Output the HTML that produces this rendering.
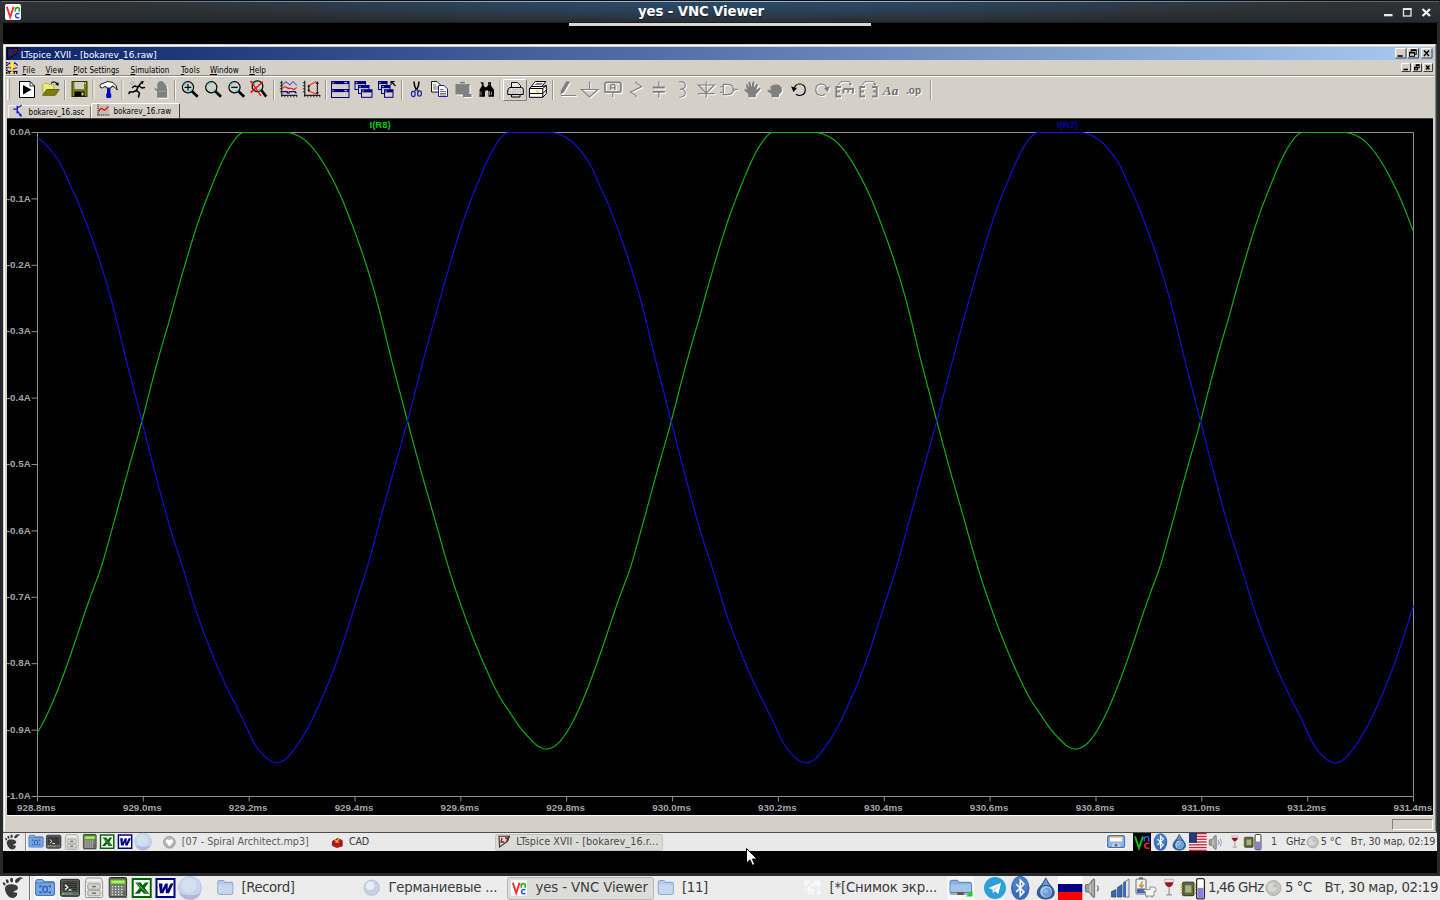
<!DOCTYPE html><html><head><meta charset='utf-8'><title>yes - VNC Viewer</title><style>
*{box-sizing:border-box;margin:0;padding:0}
html,body{width:1440px;height:900px;overflow:hidden;background:#000}
body{position:relative;font-family:"DejaVu Sans","Liberation Sans",sans-serif;font-size:13.33px;color:#2e3436}
.a{position:absolute}
.t{position:absolute;white-space:nowrap;line-height:1}
.cond{font-family:"DejaVu Sans Condensed","DejaVu Sans","Liberation Sans",sans-serif}
.ax{font-family:"Liberation Sans",sans-serif;font-weight:bold;font-size:9.8px;color:#a4a4a4}
.ot{font-size:13.33px;color:#3c3c3c;top:880.5px}
.it{font-size:9.65px;color:#444;top:837px}
svg{position:absolute;overflow:visible;left:0;top:0}
svg text{white-space:pre}
</style></head><body>
<div class="a" style="left:0;top:0;width:1440px;height:876px;background:#27292b"></div>
<div class="a" style="left:3px;top:23px;width:1434px;height:850px;background:#000"></div>
<div class="a" style="left:0;top:0;width:1440px;height:23px;background:linear-gradient(#303335 0%,#2c2e30 60%,#28292b 100%)"></div>
<div class="a" style="left:0;top:0;width:1440px;height:23px;background:radial-gradient(ellipse 620px 24px at 50% 1px,rgba(42,76,110,0.95) 0%,rgba(42,74,106,0.7) 40%,rgba(42,72,102,0.28) 75%,rgba(42,72,102,0) 100%)"></div>
<div class="a" style="left:1px;top:1px;width:1438px;height:1px;background:linear-gradient(90deg,rgba(125,130,135,0.55) 0%,rgba(165,186,206,0.95) 40%,rgba(165,186,206,0.95) 60%,rgba(125,130,135,0.55) 100%)"></div>
<div class="a" style="left:0;top:0;width:1440px;height:1px;background:#0e0f10"></div>
<div class="a" style="left:0;top:22px;width:1440px;height:1px;background:#1d1e1f"></div>
<div class="t" style="left:638px;top:4.5px;font-weight:bold;font-size:13.33px;color:#fff;text-shadow:0 1px 1px rgba(0,0,0,.55);letter-spacing:-0.124px;">yes - VNC Viewer</div>
<div class="a" style="left:569px;top:23px;width:302px;height:3px;background:#d6d6d6"></div>
<div class="a" style="left:3px;top:44px;width:1434px;height:788px;background:#d4d0c8"></div>
<div class="a" style="left:4px;top:45px;width:1431px;height:1px;background:#fff"></div>
<div class="a" style="left:4px;top:45px;width:1px;height:786px;background:#fff"></div>
<div class="a" style="left:1436px;top:44px;width:1px;height:788px;background:#404040"></div>
<div class="a" style="left:1435px;top:45px;width:1px;height:786px;background:#808080"></div>
<div class="a" style="left:6px;top:47px;width:1428px;height:13px;background:linear-gradient(90deg,#0a246a 0%,#a6caf0 100%)"></div>
<div class="t" style="left:20.7px;top:51px;font-size:8.8px;color:#fff;letter-spacing:-0.002px;">LTspice XVII - [bokarev_16.raw]</div>
<div class="t cond" style="left:22.4px;top:65.8px;font-size:8.1px;color:#000;letter-spacing:0.215px;"><u>F</u>ile</div>
<div class="t cond" style="left:45.5px;top:65.8px;font-size:8.1px;color:#000;letter-spacing:0.134px;"><u>V</u>iew</div>
<div class="t cond" style="left:73.3px;top:65.8px;font-size:8.1px;color:#000;letter-spacing:0.015px;"><u>P</u>lot Settings</div>
<div class="t cond" style="left:130.6px;top:65.8px;font-size:8.1px;color:#000;letter-spacing:0.000px;"><u>S</u>imulation</div>
<div class="t cond" style="left:180.9px;top:65.8px;font-size:8.1px;color:#000;letter-spacing:0.261px;"><u>T</u>ools</div>
<div class="t cond" style="left:210px;top:65.8px;font-size:8.1px;color:#000;letter-spacing:-0.001px;"><u>W</u>indow</div>
<div class="t cond" style="left:249.3px;top:65.8px;font-size:8.1px;color:#000;letter-spacing:-0.052px;"><u>H</u>elp</div>
<div class="a" style="left:6px;top:75px;width:1428px;height:1px;background:#8a8780"></div>
<div class="a" style="left:6px;top:76px;width:1428px;height:1px;background:#fff"></div>
<div class="a" style="left:8px;top:104.5px;width:83px;height:13.5px;background:#d4d0c8;border:1px solid #f4f2ee;border-right-color:#77746e;border-bottom:none;border-radius:2px 2px 0 0"></div>
<div class="a" style="left:91px;top:103px;width:89px;height:15px;background:#d4d0c8;border:1px solid #fff;border-right:1px solid #404040;border-bottom:none;border-radius:2px 2px 0 0"></div>
<div class="t cond" style="left:28.6px;top:109.1px;font-size:8px;color:#000;letter-spacing:-0.010px;">bokarev_16.asc</div>
<div class="t cond" style="left:113.4px;top:108.1px;font-size:8px;color:#000;letter-spacing:0.045px;">bokarev_16.raw</div>
<div class="a" style="left:7px;top:118px;width:1426px;height:697px;background:#000;border-top:1px solid #404040"></div>
<svg width="1440" height="900" viewBox="0 0 1440 900">
<path d="M37.5,132.5 H1413.5 V796.5 H37.5 Z" fill="none" stroke="#8e8e8e" stroke-width="1"/>
<path d="M31.5,132.5 H37 M31.5,198.9 H37 M31.5,265.3 H37 M31.5,331.7 H37 M31.5,398.1 H37 M31.5,464.5 H37 M31.5,530.9 H37 M31.5,597.3 H37 M31.5,663.7 H37 M31.5,730.1 H37 M31.5,796.5 H37 M37.5,796.5 V801.5 M143.3,796.5 V801.5 M249.2,796.5 V801.5 M355.0,796.5 V801.5 M460.9,796.5 V801.5 M566.7,796.5 V801.5 M672.6,796.5 V801.5 M778.4,796.5 V801.5 M884.3,796.5 V801.5 M990.1,796.5 V801.5 M1096.0,796.5 V801.5 M1201.8,796.5 V801.5 M1307.7,796.5 V801.5 M1413.5,796.5 V801.5 " stroke="#8e8e8e" stroke-width="1" fill="none"/>
<path d="M37.5,732.2 L39.5,729.0 L41.5,725.5 L43.5,721.7 L45.5,717.8 L47.5,713.7 L49.5,709.4 L51.5,704.9 L53.5,700.2 L55.5,695.4 L57.5,690.5 L59.5,685.4 L61.5,680.1 L63.5,674.7 L65.5,669.3 L67.5,663.7 L69.5,658.0 L71.5,652.3 L73.5,646.4 L75.5,640.6 L77.5,634.6 L79.5,628.6 L81.5,622.5 L83.5,616.5 L85.5,610.7 L87.5,604.9 L89.5,599.3 L91.5,593.8 L93.5,588.4 L95.5,583.1 L97.5,577.9 L99.5,572.4 L101.5,566.3 L103.5,559.8 L105.5,552.9 L107.5,545.7 L109.5,538.4 L111.5,531.2 L113.5,523.9 L115.5,516.7 L117.5,509.4 L119.5,502.0 L121.5,494.6 L123.5,487.2 L125.5,479.9 L127.5,472.6 L129.5,465.4 L131.5,458.3 L133.5,451.3 L135.5,444.3 L137.5,437.3 L139.5,430.1 L141.5,422.8 L143.5,415.3 L145.5,407.6 L147.5,399.7 L149.5,391.9 L151.5,384.1 L153.5,376.4 L155.5,369.0 L157.5,361.6 L159.5,354.4 L161.5,347.3 L163.5,340.4 L165.5,333.6 L167.5,326.8 L169.5,319.8 L171.5,312.7 L173.5,305.4 L175.5,298.1 L177.5,290.8 L179.5,283.7 L181.5,276.7 L183.5,269.8 L185.5,263.0 L187.5,256.2 L189.5,249.5 L191.5,243.0 L193.5,236.5 L195.5,230.2 L197.5,224.1 L199.5,218.1 L201.5,212.5 L203.5,207.0 L205.5,201.7 L207.5,196.6 L209.5,191.5 L211.5,186.5 L213.5,181.6 L215.5,176.8 L217.5,172.0 L219.5,167.2 L221.5,162.7 L223.5,158.5 L225.5,154.4 L227.5,150.7 L229.5,147.2 L231.5,144.0 L233.5,141.1 L235.5,138.5 L237.5,136.2 L239.5,134.4 L241.5,133.0 L243.5,132.5 L245.5,132.5 L247.5,132.5 L249.5,132.5 L251.5,132.5 L253.5,132.5 L255.5,132.5 L257.5,132.5 L259.5,132.5 L261.5,132.5 L263.5,132.5 L265.5,132.5 L267.5,132.5 L269.5,132.5 L271.5,132.5 L273.5,132.5 L275.5,132.5 L277.5,132.5 L279.5,132.5 L281.5,132.5 L283.5,132.5 L285.5,132.5 L287.5,132.5 L289.5,132.8 L291.5,133.3 L293.5,133.9 L295.5,134.7 L297.5,135.6 L299.5,136.5 L301.5,137.7 L303.5,139.0 L305.5,140.5 L307.5,142.3 L309.5,144.3 L311.5,146.4 L313.5,148.8 L315.5,151.3 L317.5,154.0 L319.5,156.9 L321.5,159.9 L323.5,163.1 L325.5,166.5 L327.5,170.0 L329.5,173.6 L331.5,177.3 L333.5,181.1 L335.5,185.1 L337.5,189.2 L339.5,193.4 L341.5,197.8 L343.5,202.5 L345.5,207.4 L347.5,212.5 L349.5,217.7 L351.5,222.9 L353.5,228.2 L355.5,233.6 L357.5,239.1 L359.5,244.7 L361.5,250.6 L363.5,256.5 L365.5,262.6 L367.5,268.8 L369.5,275.2 L371.5,281.8 L373.5,288.6 L375.5,295.7 L377.5,303.1 L379.5,310.7 L381.5,318.7 L383.5,326.9 L385.5,335.4 L387.5,343.7 L389.5,351.9 L391.5,359.9 L393.5,367.7 L395.5,375.5 L397.5,383.2 L399.5,390.8 L401.5,398.4 L403.5,405.9 L405.5,413.5 L407.5,421.0 L409.5,428.5 L411.5,436.1 L413.5,443.5 L415.5,451.0 L417.5,458.4 L419.5,465.6 L421.5,472.8 L423.5,479.9 L425.5,487.0 L427.5,493.9 L429.5,500.9 L431.5,507.8 L433.5,514.8 L435.5,521.8 L437.5,528.9 L439.5,536.0 L441.5,543.2 L443.5,550.3 L445.5,557.3 L447.5,564.2 L449.5,570.8 L451.5,577.2 L453.5,583.4 L455.5,589.4 L457.5,595.3 L459.5,601.0 L461.5,606.7 L463.5,612.3 L465.5,617.9 L467.5,623.3 L469.5,628.6 L471.5,633.9 L473.5,639.0 L475.5,644.0 L477.5,648.9 L479.5,653.8 L481.5,658.5 L483.5,663.1 L485.5,667.6 L487.5,672.1 L489.5,676.4 L491.5,680.7 L493.5,684.9 L495.5,688.9 L497.5,692.8 L499.5,696.5 L501.5,699.9 L503.5,703.0 L505.5,706.0 L507.5,708.9 L509.5,711.8 L511.5,714.8 L513.5,717.9 L515.5,721.0 L517.5,723.9 L519.5,726.7 L521.5,729.3 L523.5,731.7 L525.5,734.0 L527.5,736.2 L529.5,738.2 L531.5,740.3 L533.5,742.3 L535.5,744.2 L537.5,745.8 L539.5,747.1 L541.5,748.0 L543.5,748.7 L545.5,749.0 L547.5,748.9 L549.5,748.5 L551.5,747.7 L553.5,746.7 L555.5,745.5 L557.5,743.9 L559.5,741.9 L561.5,739.6 L563.5,737.0 L565.5,734.2 L567.5,731.1 L569.5,727.8 L571.5,724.2 L573.5,720.4 L575.5,716.4 L577.5,712.2 L579.5,707.9 L581.5,703.3 L583.5,698.6 L585.5,693.7 L587.5,688.7 L589.5,683.5 L591.5,678.2 L593.5,672.8 L595.5,667.3 L597.5,661.7 L599.5,656.0 L601.5,650.2 L603.5,644.4 L605.5,638.5 L607.5,632.5 L609.5,626.4 L611.5,620.4 L613.5,614.5 L615.5,608.6 L617.5,602.9 L619.5,597.3 L621.5,591.9 L623.5,586.5 L625.5,581.3 L627.5,576.0 L629.5,570.3 L631.5,564.1 L633.5,557.4 L635.5,550.4 L637.5,543.2 L639.5,535.9 L641.5,528.6 L643.5,521.4 L645.5,514.1 L647.5,506.8 L649.5,499.4 L651.5,492.0 L653.5,484.6 L655.5,477.3 L657.5,470.1 L659.5,462.9 L661.5,455.9 L663.5,448.9 L665.5,441.9 L667.5,434.8 L669.5,427.6 L671.5,420.2 L673.5,412.6 L675.5,404.8 L677.5,397.0 L679.5,389.1 L681.5,381.4 L683.5,373.8 L685.5,366.4 L687.5,359.0 L689.5,351.9 L691.5,344.9 L693.5,338.0 L695.5,331.2 L697.5,324.4 L699.5,317.4 L701.5,310.2 L703.5,302.8 L705.5,295.5 L707.5,288.3 L709.5,281.2 L711.5,274.3 L713.5,267.4 L715.5,260.6 L717.5,253.9 L719.5,247.2 L721.5,240.7 L723.5,234.3 L725.5,228.0 L727.5,222.0 L729.5,216.1 L731.5,210.5 L733.5,205.1 L735.5,199.9 L737.5,194.8 L739.5,189.7 L741.5,184.8 L743.5,179.9 L745.5,175.1 L747.5,170.3 L749.5,165.6 L751.5,161.2 L753.5,157.0 L755.5,153.1 L757.5,149.4 L759.5,146.1 L761.5,143.0 L763.5,140.1 L765.5,137.6 L767.5,135.6 L769.5,133.8 L771.5,132.6 L773.5,132.5 L775.5,132.5 L777.5,132.5 L779.5,132.5 L781.5,132.5 L783.5,132.5 L785.5,132.5 L787.5,132.5 L789.5,132.5 L791.5,132.5 L793.5,132.5 L795.5,132.5 L797.5,132.5 L799.5,132.5 L801.5,132.5 L803.5,132.5 L805.5,132.5 L807.5,132.5 L809.5,132.5 L811.5,132.5 L813.5,132.5 L815.5,132.5 L817.5,132.6 L819.5,132.9 L821.5,133.5 L823.5,134.2 L825.5,135.0 L827.5,135.9 L829.5,136.9 L831.5,138.1 L833.5,139.5 L835.5,141.1 L837.5,142.9 L839.5,145.0 L841.5,147.2 L843.5,149.6 L845.5,152.2 L847.5,155.0 L849.5,157.9 L851.5,161.0 L853.5,164.3 L855.5,167.8 L857.5,171.3 L859.5,174.9 L861.5,178.6 L863.5,182.5 L865.5,186.5 L867.5,190.6 L869.5,194.9 L871.5,199.4 L873.5,204.2 L875.5,209.2 L877.5,214.3 L879.5,219.5 L881.5,224.8 L883.5,230.1 L885.5,235.5 L887.5,241.0 L889.5,246.8 L891.5,252.6 L893.5,258.6 L895.5,264.7 L897.5,271.0 L899.5,277.4 L901.5,284.1 L903.5,291.0 L905.5,298.2 L907.5,305.7 L909.5,313.5 L911.5,321.5 L913.5,329.9 L915.5,338.3 L917.5,346.6 L919.5,354.7 L921.5,362.6 L923.5,370.5 L925.5,378.2 L927.5,385.8 L929.5,393.4 L931.5,401.0 L933.5,408.6 L935.5,416.1 L937.5,423.6 L939.5,431.2 L941.5,438.7 L943.5,446.2 L945.5,453.6 L947.5,460.9 L949.5,468.2 L951.5,475.3 L953.5,482.4 L955.5,489.4 L957.5,496.4 L959.5,503.3 L961.5,510.3 L963.5,517.2 L965.5,524.3 L967.5,531.4 L969.5,538.5 L971.5,545.7 L973.5,552.8 L975.5,559.7 L977.5,566.5 L979.5,573.1 L981.5,579.4 L983.5,585.6 L985.5,591.5 L987.5,597.3 L989.5,603.0 L991.5,608.7 L993.5,614.3 L995.5,619.8 L997.5,625.2 L999.5,630.5 L1001.5,635.7 L1003.5,640.8 L1005.5,645.7 L1007.5,650.6 L1009.5,655.4 L1011.5,660.1 L1013.5,664.7 L1015.5,669.2 L1017.5,673.6 L1019.5,677.9 L1021.5,682.1 L1023.5,686.3 L1025.5,690.3 L1027.5,694.1 L1029.5,697.7 L1031.5,701.0 L1033.5,704.0 L1035.5,707.0 L1037.5,709.9 L1039.5,712.9 L1041.5,715.9 L1043.5,719.0 L1045.5,722.0 L1047.5,724.9 L1049.5,727.7 L1051.5,730.2 L1053.5,732.5 L1055.5,734.8 L1057.5,736.9 L1059.5,739.0 L1061.5,741.0 L1063.5,743.0 L1065.5,744.8 L1067.5,746.3 L1069.5,747.4 L1071.5,748.3 L1073.5,748.8 L1075.5,749.0 L1077.5,748.8 L1079.5,748.3 L1081.5,747.4 L1083.5,746.3 L1085.5,745.0 L1087.5,743.3 L1089.5,741.1 L1091.5,738.7 L1093.5,736.0 L1095.5,733.1 L1097.5,730.0 L1099.5,726.5 L1101.5,722.9 L1103.5,719.0 L1105.5,715.0 L1107.5,710.7 L1109.5,706.3 L1111.5,701.6 L1113.5,696.9 L1115.5,692.0 L1117.5,686.9 L1119.5,681.7 L1121.5,676.3 L1123.5,670.9 L1125.5,665.4 L1127.5,659.7 L1129.5,654.0 L1131.5,648.2 L1133.5,642.3 L1135.5,636.4 L1137.5,630.4 L1139.5,624.3 L1141.5,618.3 L1143.5,612.4 L1145.5,606.6 L1147.5,601.0 L1149.5,595.4 L1151.5,590.0 L1153.5,584.7 L1155.5,579.5 L1157.5,574.1 L1159.5,568.2 L1161.5,561.8 L1163.5,555.0 L1165.5,547.9 L1167.5,540.6 L1169.5,533.3 L1171.5,526.1 L1173.5,518.9 L1175.5,511.6 L1177.5,504.2 L1179.5,496.8 L1181.5,489.4 L1183.5,482.1 L1185.5,474.8 L1187.5,467.5 L1189.5,460.4 L1191.5,453.4 L1193.5,446.4 L1195.5,439.4 L1197.5,432.3 L1199.5,425.0 L1201.5,417.6 L1203.5,409.9 L1205.5,402.1 L1207.5,394.2 L1209.5,386.4 L1211.5,378.7 L1213.5,371.2 L1215.5,363.8 L1217.5,356.5 L1219.5,349.4 L1221.5,342.4 L1223.5,335.6 L1225.5,328.8 L1227.5,321.9 L1229.5,314.9 L1231.5,307.6 L1233.5,300.3 L1235.5,293.0 L1237.5,285.8 L1239.5,278.8 L1241.5,271.9 L1243.5,265.0 L1245.5,258.3 L1247.5,251.5 L1249.5,244.9 L1251.5,238.4 L1253.5,232.1 L1255.5,225.9 L1257.5,219.9 L1259.5,214.1 L1261.5,208.6 L1263.5,203.3 L1265.5,198.1 L1267.5,193.0 L1269.5,188.0 L1271.5,183.1 L1273.5,178.2 L1275.5,173.4 L1277.5,168.6 L1279.5,164.1 L1281.5,159.7 L1283.5,155.6 L1285.5,151.8 L1287.5,148.2 L1289.5,145.0 L1291.5,142.0 L1293.5,139.2 L1295.5,136.8 L1297.5,134.9 L1299.5,133.3 L1301.5,132.5 L1303.5,132.5 L1305.5,132.5 L1307.5,132.5 L1309.5,132.5 L1311.5,132.5 L1313.5,132.5 L1315.5,132.5 L1317.5,132.5 L1319.5,132.5 L1321.5,132.5 L1323.5,132.5 L1325.5,132.5 L1327.5,132.5 L1329.5,132.5 L1331.5,132.5 L1333.5,132.5 L1335.5,132.5 L1337.5,132.5 L1339.5,132.5 L1341.5,132.5 L1343.5,132.5 L1345.5,132.5 L1347.5,132.7 L1349.5,133.1 L1351.5,133.7 L1353.5,134.5 L1355.5,135.3 L1357.5,136.2 L1359.5,137.3 L1361.5,138.6 L1363.5,140.0 L1365.5,141.7 L1367.5,143.6 L1369.5,145.8 L1371.5,148.0 L1373.5,150.5 L1375.5,153.2 L1377.5,156.0 L1379.5,159.0 L1381.5,162.2 L1383.5,165.5 L1385.5,169.0 L1387.5,172.5 L1389.5,176.2 L1391.5,180.0 L1393.5,183.9 L1395.5,187.9 L1397.5,192.1 L1399.5,196.5 L1401.5,201.1 L1403.5,205.9 L1405.5,211.0 L1407.5,216.1 L1409.5,221.4 L1411.5,226.6 L1413.5,232.0" fill="none" stroke="#0cb60c" stroke-width="1.15" stroke-linejoin="round"/>
<path d="M37.5,137.9 L39.5,139.2 L41.5,140.7 L43.5,142.4 L45.5,144.3 L47.5,146.4 L49.5,148.7 L51.5,151.0 L53.5,153.5 L55.5,156.1 L57.5,159.0 L59.5,162.2 L61.5,165.8 L63.5,169.8 L65.5,174.3 L67.5,178.9 L69.5,183.4 L71.5,187.8 L73.5,192.0 L75.5,196.3 L77.5,200.9 L79.5,205.7 L81.5,210.7 L83.5,215.9 L85.5,221.1 L87.5,226.3 L89.5,231.7 L91.5,237.1 L93.5,242.7 L95.5,248.5 L97.5,254.4 L99.5,260.4 L101.5,266.6 L103.5,272.9 L105.5,279.4 L107.5,286.2 L109.5,293.2 L111.5,300.5 L113.5,308.0 L115.5,315.8 L117.5,324.0 L119.5,332.4 L121.5,340.8 L123.5,349.1 L125.5,357.2 L127.5,365.1 L129.5,373.0 L131.5,380.8 L133.5,388.5 L135.5,396.3 L137.5,404.0 L139.5,411.7 L141.5,419.5 L143.5,427.3 L145.5,435.2 L147.5,443.1 L149.5,451.0 L151.5,458.8 L153.5,466.5 L155.5,474.2 L157.5,481.8 L159.5,489.4 L161.5,496.9 L163.5,504.4 L165.5,511.7 L167.5,518.8 L169.5,525.8 L171.5,532.5 L173.5,539.0 L175.5,545.3 L177.5,551.4 L179.5,557.4 L181.5,563.5 L183.5,569.7 L185.5,576.1 L187.5,582.7 L189.5,589.5 L191.5,596.3 L193.5,602.9 L195.5,609.2 L197.5,615.2 L199.5,620.9 L201.5,626.3 L203.5,631.7 L205.5,636.9 L207.5,642.1 L209.5,647.2 L211.5,652.3 L213.5,657.2 L215.5,662.0 L217.5,666.7 L219.5,671.3 L221.5,675.8 L223.5,680.2 L225.5,684.5 L227.5,688.7 L229.5,692.7 L231.5,696.7 L233.5,700.7 L235.5,704.6 L237.5,708.6 L239.5,712.5 L241.5,716.5 L243.5,720.5 L245.5,724.7 L247.5,729.1 L249.5,733.6 L251.5,738.0 L253.5,742.0 L255.5,745.4 L257.5,748.3 L259.5,750.8 L261.5,753.1 L263.5,755.2 L265.5,757.2 L267.5,758.9 L269.5,760.4 L271.5,761.5 L273.5,762.3 L275.5,762.7 L277.5,762.7 L279.5,762.3 L281.5,761.6 L283.5,760.6 L285.5,759.2 L287.5,757.3 L289.5,755.1 L291.5,752.7 L293.5,750.3 L295.5,747.6 L297.5,744.8 L299.5,741.8 L301.5,738.7 L303.5,735.4 L305.5,732.0 L307.5,728.4 L309.5,724.7 L311.5,720.8 L313.5,716.8 L315.5,712.5 L317.5,708.1 L319.5,703.7 L321.5,699.2 L323.5,694.6 L325.5,690.0 L327.5,685.3 L329.5,680.4 L331.5,675.4 L333.5,670.1 L335.5,664.7 L337.5,659.1 L339.5,653.4 L341.5,647.5 L343.5,641.5 L345.5,635.2 L347.5,628.9 L349.5,622.6 L351.5,616.2 L353.5,609.9 L355.5,603.6 L357.5,597.4 L359.5,591.2 L361.5,585.3 L363.5,579.3 L365.5,573.1 L367.5,566.5 L369.5,559.4 L371.5,552.0 L373.5,544.5 L375.5,536.9 L377.5,529.4 L379.5,521.9 L381.5,514.6 L383.5,507.4 L385.5,500.2 L387.5,493.0 L389.5,485.8 L391.5,478.6 L393.5,471.4 L395.5,464.3 L397.5,457.1 L399.5,450.0 L401.5,442.8 L403.5,435.6 L405.5,428.3 L407.5,420.9 L409.5,413.4 L411.5,405.8 L413.5,398.1 L415.5,390.4 L417.5,382.6 L419.5,374.8 L421.5,367.1 L423.5,359.4 L425.5,351.9 L427.5,344.6 L429.5,337.3 L431.5,330.1 L433.5,322.9 L435.5,315.6 L437.5,308.3 L439.5,300.9 L441.5,293.7 L443.5,286.5 L445.5,279.5 L447.5,272.6 L449.5,265.7 L451.5,258.9 L453.5,252.2 L455.5,245.6 L457.5,239.1 L459.5,232.7 L461.5,226.5 L463.5,220.5 L465.5,214.7 L467.5,209.2 L469.5,203.8 L471.5,198.6 L473.5,193.5 L475.5,188.5 L477.5,183.6 L479.5,178.7 L481.5,173.9 L483.5,169.1 L485.5,164.5 L487.5,160.1 L489.5,156.0 L491.5,152.2 L493.5,148.6 L495.5,145.3 L497.5,142.2 L499.5,139.4 L501.5,137.0 L503.5,135.1 L505.5,133.6 L507.5,132.6 L509.5,132.5 L511.5,132.5 L513.5,132.5 L515.5,132.5 L517.5,132.5 L519.5,132.5 L521.5,132.5 L523.5,132.5 L525.5,132.5 L527.5,132.5 L529.5,132.5 L531.5,132.5 L533.5,132.5 L535.5,132.5 L537.5,132.5 L539.5,132.5 L541.5,132.5 L543.5,132.5 L545.5,132.5 L547.5,132.5 L549.5,132.5 L551.5,132.5 L553.5,132.7 L555.5,133.1 L557.5,133.6 L559.5,134.3 L561.5,135.2 L563.5,136.1 L565.5,137.2 L567.5,138.4 L569.5,139.7 L571.5,141.3 L573.5,143.1 L575.5,145.0 L577.5,147.2 L579.5,149.5 L581.5,151.9 L583.5,154.4 L585.5,157.1 L587.5,160.1 L589.5,163.4 L591.5,167.1 L593.5,171.3 L595.5,175.9 L597.5,180.5 L599.5,185.0 L601.5,189.3 L603.5,193.5 L605.5,197.9 L607.5,202.5 L609.5,207.4 L611.5,212.5 L613.5,217.7 L615.5,222.9 L617.5,228.2 L619.5,233.6 L621.5,239.1 L623.5,244.7 L625.5,250.6 L627.5,256.5 L629.5,262.6 L631.5,268.8 L633.5,275.2 L635.5,281.8 L637.5,288.6 L639.5,295.7 L641.5,303.1 L643.5,310.7 L645.5,318.7 L647.5,326.9 L649.5,335.3 L651.5,343.7 L653.5,351.9 L655.5,360.0 L657.5,367.9 L659.5,375.7 L661.5,383.5 L663.5,391.2 L665.5,399.0 L667.5,406.7 L669.5,414.5 L671.5,422.3 L673.5,430.1 L675.5,438.0 L677.5,445.9 L679.5,453.7 L681.5,461.5 L683.5,469.2 L685.5,476.9 L687.5,484.5 L689.5,492.0 L691.5,499.5 L693.5,506.9 L695.5,514.2 L697.5,521.3 L699.5,528.2 L701.5,534.8 L703.5,541.2 L705.5,547.4 L707.5,553.5 L709.5,559.6 L711.5,565.7 L713.5,571.9 L715.5,578.4 L717.5,585.1 L719.5,591.9 L721.5,598.6 L723.5,605.1 L725.5,611.3 L727.5,617.2 L729.5,622.8 L731.5,628.2 L733.5,633.5 L735.5,638.8 L737.5,643.9 L739.5,649.0 L741.5,654.0 L743.5,658.9 L745.5,663.6 L747.5,668.3 L749.5,672.9 L751.5,677.4 L753.5,681.7 L755.5,686.0 L757.5,690.1 L759.5,694.1 L761.5,698.1 L763.5,702.0 L765.5,706.0 L767.5,710.0 L769.5,713.9 L771.5,717.9 L773.5,722.0 L775.5,726.2 L777.5,730.7 L779.5,735.2 L781.5,739.5 L783.5,743.3 L785.5,746.5 L787.5,749.2 L789.5,751.7 L791.5,753.9 L793.5,755.9 L795.5,757.8 L797.5,759.5 L799.5,760.8 L801.5,761.8 L803.5,762.5 L805.5,762.8 L807.5,762.6 L809.5,762.1 L811.5,761.3 L813.5,760.2 L815.5,758.6 L817.5,756.5 L819.5,754.3 L821.5,751.9 L823.5,749.3 L825.5,746.6 L827.5,743.7 L829.5,740.7 L831.5,737.6 L833.5,734.2 L835.5,730.8 L837.5,727.2 L839.5,723.4 L841.5,719.4 L843.5,715.3 L845.5,711.0 L847.5,706.6 L849.5,702.1 L851.5,697.6 L853.5,693.0 L855.5,688.4 L857.5,683.6 L859.5,678.7 L861.5,673.5 L863.5,668.2 L865.5,662.8 L867.5,657.2 L869.5,651.4 L871.5,645.4 L873.5,639.3 L875.5,633.0 L877.5,626.7 L879.5,620.3 L881.5,614.0 L883.5,607.7 L885.5,601.4 L887.5,595.2 L889.5,589.1 L891.5,583.2 L893.5,577.2 L895.5,570.8 L897.5,564.0 L899.5,556.9 L901.5,549.4 L903.5,541.9 L905.5,534.3 L907.5,526.7 L909.5,519.3 L911.5,512.1 L913.5,504.8 L915.5,497.6 L917.5,490.4 L919.5,483.3 L921.5,476.1 L923.5,468.9 L925.5,461.8 L927.5,454.6 L929.5,447.5 L931.5,440.3 L933.5,433.1 L935.5,425.7 L937.5,418.3 L939.5,410.8 L941.5,403.1 L943.5,395.4 L945.5,387.6 L947.5,379.9 L949.5,372.1 L951.5,364.4 L953.5,356.8 L955.5,349.3 L957.5,342.0 L959.5,334.8 L961.5,327.6 L963.5,320.4 L965.5,313.1 L967.5,305.7 L969.5,298.4 L971.5,291.2 L973.5,284.0 L975.5,277.1 L977.5,270.2 L979.5,263.3 L981.5,256.6 L983.5,249.9 L985.5,243.3 L987.5,236.8 L989.5,230.5 L991.5,224.4 L993.5,218.4 L995.5,212.7 L997.5,207.3 L999.5,202.0 L1001.5,196.8 L1003.5,191.7 L1005.5,186.8 L1007.5,181.9 L1009.5,177.0 L1011.5,172.2 L1013.5,167.5 L1015.5,162.9 L1017.5,158.7 L1019.5,154.6 L1021.5,150.9 L1023.5,147.4 L1025.5,144.2 L1027.5,141.2 L1029.5,138.5 L1031.5,136.3 L1033.5,134.5 L1035.5,133.1 L1037.5,132.5 L1039.5,132.5 L1041.5,132.5 L1043.5,132.5 L1045.5,132.5 L1047.5,132.5 L1049.5,132.5 L1051.5,132.5 L1053.5,132.5 L1055.5,132.5 L1057.5,132.5 L1059.5,132.5 L1061.5,132.5 L1063.5,132.5 L1065.5,132.5 L1067.5,132.5 L1069.5,132.5 L1071.5,132.5 L1073.5,132.5 L1075.5,132.5 L1077.5,132.5 L1079.5,132.5 L1081.5,132.5 L1083.5,132.8 L1085.5,133.2 L1087.5,133.9 L1089.5,134.6 L1091.5,135.5 L1093.5,136.4 L1095.5,137.6 L1097.5,138.8 L1099.5,140.3 L1101.5,141.9 L1103.5,143.7 L1105.5,145.8 L1107.5,148.0 L1109.5,150.3 L1111.5,152.7 L1113.5,155.3 L1115.5,158.1 L1117.5,161.2 L1119.5,164.6 L1121.5,168.5 L1123.5,172.9 L1125.5,177.5 L1127.5,182.1 L1129.5,186.5 L1131.5,190.7 L1133.5,195.0 L1135.5,199.5 L1137.5,204.2 L1139.5,209.2 L1141.5,214.3 L1143.5,219.5 L1145.5,224.8 L1147.5,230.1 L1149.5,235.5 L1151.5,241.0 L1153.5,246.8 L1155.5,252.6 L1157.5,258.6 L1159.5,264.7 L1161.5,271.0 L1163.5,277.4 L1165.5,284.1 L1167.5,291.0 L1169.5,298.2 L1171.5,305.7 L1173.5,313.5 L1175.5,321.5 L1177.5,329.9 L1179.5,338.3 L1181.5,346.6 L1183.5,354.8 L1185.5,362.8 L1187.5,370.6 L1189.5,378.5 L1191.5,386.2 L1193.5,394.0 L1195.5,401.7 L1197.5,409.4 L1199.5,417.2 L1201.5,425.0 L1203.5,432.9 L1205.5,440.7 L1207.5,448.6 L1209.5,456.5 L1211.5,464.2 L1213.5,471.9 L1215.5,479.5 L1217.5,487.1 L1219.5,494.7 L1221.5,502.1 L1223.5,509.5 L1225.5,516.7 L1227.5,523.7 L1229.5,530.5 L1231.5,537.1 L1233.5,543.4 L1235.5,549.5 L1237.5,555.6 L1239.5,561.7 L1241.5,567.8 L1243.5,574.2 L1245.5,580.7 L1247.5,587.5 L1249.5,594.3 L1251.5,600.9 L1253.5,607.3 L1255.5,613.4 L1257.5,619.2 L1259.5,624.7 L1261.5,630.1 L1263.5,635.4 L1265.5,640.6 L1267.5,645.7 L1269.5,650.8 L1271.5,655.7 L1273.5,660.5 L1275.5,665.3 L1277.5,669.9 L1279.5,674.5 L1281.5,678.9 L1283.5,683.2 L1285.5,687.4 L1287.5,691.5 L1289.5,695.5 L1291.5,699.5 L1293.5,703.4 L1295.5,707.4 L1297.5,711.3 L1299.5,715.3 L1301.5,719.3 L1303.5,723.4 L1305.5,727.8 L1307.5,732.3 L1309.5,736.7 L1311.5,740.9 L1313.5,744.4 L1315.5,747.5 L1317.5,750.1 L1319.5,752.5 L1321.5,754.6 L1323.5,756.6 L1325.5,758.5 L1327.5,760.0 L1329.5,761.2 L1331.5,762.1 L1333.5,762.6 L1335.5,762.7 L1337.5,762.5 L1339.5,761.9 L1341.5,760.9 L1343.5,759.6 L1345.5,757.9 L1347.5,755.8 L1349.5,753.5 L1351.5,751.0 L1353.5,748.4 L1355.5,745.6 L1357.5,742.7 L1359.5,739.6 L1361.5,736.4 L1363.5,733.0 L1365.5,729.5 L1367.5,725.9 L1369.5,722.0 L1371.5,718.0 L1373.5,713.8 L1375.5,709.5 L1377.5,705.0 L1379.5,700.5 L1381.5,696.0 L1383.5,691.4 L1385.5,686.7 L1387.5,681.9 L1389.5,676.9 L1391.5,671.7 L1393.5,666.4 L1395.5,660.8 L1397.5,655.1 L1399.5,649.3 L1401.5,643.3 L1403.5,637.1 L1405.5,630.8 L1407.5,624.5 L1409.5,618.1 L1411.5,611.8 L1413.5,605.5" fill="none" stroke="#1010dc" stroke-width="1.15" stroke-linejoin="round"/>
<path d="M7.5,79 V100" stroke="#fff" stroke-width="1"/><path d="M8.500,79 V100" stroke="#e4e0d8" stroke-width="1"/><path d="M9.500,79 V100" stroke="#a8a49c" stroke-width="1"/>
<path d="M64.5,80 V100" stroke="#9c9890" stroke-width="1"/><path d="M65.5,80 V100" stroke="#f4f2ee" stroke-width="1"/>
<path d="M93,80 V100" stroke="#9c9890" stroke-width="1"/><path d="M94,80 V100" stroke="#f4f2ee" stroke-width="1"/>
<path d="M122,80 V100" stroke="#9c9890" stroke-width="1"/><path d="M123,80 V100" stroke="#f4f2ee" stroke-width="1"/>
<path d="M174.5,80 V100" stroke="#9c9890" stroke-width="1"/><path d="M175.5,80 V100" stroke="#f4f2ee" stroke-width="1"/>
<path d="M273.5,80 V100" stroke="#9c9890" stroke-width="1"/><path d="M274.5,80 V100" stroke="#f4f2ee" stroke-width="1"/>
<path d="M325.5,80 V100" stroke="#9c9890" stroke-width="1"/><path d="M326.5,80 V100" stroke="#f4f2ee" stroke-width="1"/>
<path d="M401.5,80 V100" stroke="#9c9890" stroke-width="1"/><path d="M402.5,80 V100" stroke="#f4f2ee" stroke-width="1"/>
<path d="M500,80 V100" stroke="#9c9890" stroke-width="1"/><path d="M501,80 V100" stroke="#f4f2ee" stroke-width="1"/>
<path d="M552.5,80 V100" stroke="#9c9890" stroke-width="1"/><path d="M553.5,80 V100" stroke="#f4f2ee" stroke-width="1"/>
<path d="M930.5,80 V100" stroke="#9c9890" stroke-width="1"/><path d="M931.5,80 V100" stroke="#f4f2ee" stroke-width="1"/>
<path d="M503.5,100 V79.500 H526" fill="none" stroke="#fff" stroke-width="1"/><path d="M503.500,100.500 H526.500 V79.500" fill="none" stroke="#808080" stroke-width="1"/>
<g transform="translate(19,81) scale(1)"><path d="M0.5,0.5 H11 L15.5,5 V16.5 H0.5 Z" fill="#fff" stroke="#000" stroke-width="1"/><path d="M11,0.5 V5 H15.5" fill="none" stroke="#000" stroke-width="0.8"/><path d="M4,4 L12.5,8.7 L4,13.5 Z" fill="#000"/></g>
<g transform="translate(42,81) scale(1)"><path d="M0.800,13.500 V3.800 L2.300,2.300 H5.500 L7,3.800 H11.800 V8.500 H4.800 Z" fill="#ecec78" stroke="#a0a040" stroke-width="0.700"/><path d="M0.800,14.300 L4.800,8.500 H17.300 L13.300,14.300 Z" fill="#808000" stroke="#505000" stroke-width="0.800"/><path d="M9,2.5 Q12,-0.8 15.5,2.8" fill="none" stroke="#000" stroke-width="1.1"/><path d="M13.2,3.2 L16.6,1.2 L16.4,5 Z" fill="#000"/></g>
<g transform="translate(71.5,81) scale(1)"><rect x="0.5" y="0.5" width="15" height="15" fill="#808000" stroke="#3a3a00" stroke-width="1"/><rect x="3" y="1" width="9.5" height="7" fill="#d4d0c8"/><rect x="13.2" y="1.5" width="1.3" height="1.5" fill="#d4d0c8"/><rect x="3" y="10.5" width="10" height="5" fill="#000"/><rect x="10" y="11.5" width="2" height="3" fill="#d4d0c8"/></g>
<g transform="translate(99,81) scale(1)"><path d="M1,4.5 Q1.5,2.5 4,2.5 Q8,-1 14,1.5 Q18,4 18.3,9 Q16,5.5 13,5 L12,7 H7.5 L7,5.5 Q5,5.5 3.5,7 Q0.8,7 1,4.5 Z" fill="#fff" stroke="#000" stroke-width="0.9"/><rect x="8" y="7.2" width="3.4" height="9.5" fill="#0000c8"/><rect x="7.2" y="12.5" width="5" height="4.2" fill="#0000c8"/></g>
<g transform="translate(128.5,81) scale(1)"><g fill="none" stroke="#000" stroke-width="1.5" stroke-linecap="round" stroke-linejoin="round"><path d="M12.5,2 L9.5,6 L8,9.5"/><path d="M9.5,6 L6,5 L4,6.5"/><path d="M10.5,5 L13.5,7 L16,6.5"/><path d="M8,9.5 L4.5,11 L1,11 L0.5,12.5"/><path d="M8,9.5 L11,12 L10,16"/></g><path d="M12,0.3 L15.5,0.3 L13.8,3.6 Z" fill="#000"/><path d="M1.5,2 L4,4 M3.5,0.5 L6,2.8" stroke="#808080" stroke-width="0.7"/></g>
<g transform="translate(152.8,80.6) scale(1.07)"><g transform="translate(1,1)"><path d="M4,16 V10 L2,8.5 Q0.8,7 2.5,6.8 L4.2,8 V3 Q5.5,0.5 7,0.3 Q9.5,0.2 11,2.5 Q13.5,5 13.5,8 V16 Z" fill="#ffffff"/></g><path d="M4,16 V10 L2,8.5 Q0.8,7 2.5,6.8 L4.2,8 V3 Q5.5,0.5 7,0.3 Q9.5,0.2 11,2.5 Q13.5,5 13.5,8 V16 Z" fill="#808080"/><path d="M6,10 h1.2 M8.3,10 h1.2 M10.6,10 h1.2" stroke="#d4d0c8" stroke-width="0.8"/></g>
<g transform="translate(181.5,81) scale(1)"><path d="M10.42,10.219999999999999 L16.2,15.8" stroke="#000" stroke-width="2.6" stroke-linecap="butt"/><circle cx="6.5" cy="6.3" r="5.6" fill="#d4d0c8" stroke="#000" stroke-width="1.2"/><path d="M2.468,4.34 Q3.42,2.3800000000000003 5.38,1.9320000000000004" stroke="#00e8e8" stroke-width="1.3" fill="none"/><path d="M10.532,8.26 Q9.58,10.219999999999999 7.62,10.668" stroke="#00e8e8" stroke-width="1.3" fill="none"/><path d="M3.2,6.3 H9.8 M6.5,3 V9.6" stroke="#000" stroke-width="1.2"/></g>
<g transform="translate(204.8,81) scale(1)"><path d="M10.42,10.219999999999999 L16.2,15.8" stroke="#000" stroke-width="2.6" stroke-linecap="butt"/><circle cx="6.5" cy="6.3" r="5.6" fill="#d4d0c8" stroke="#000" stroke-width="1.2"/><path d="M2.468,4.34 Q3.42,2.3800000000000003 5.38,1.9320000000000004" stroke="#00e8e8" stroke-width="1.3" fill="none"/><path d="M10.532,8.26 Q9.58,10.219999999999999 7.62,10.668" stroke="#00e8e8" stroke-width="1.3" fill="none"/></g>
<g transform="translate(228,81) scale(1)"><path d="M10.42,10.219999999999999 L16.2,15.8" stroke="#000" stroke-width="2.6" stroke-linecap="butt"/><circle cx="6.5" cy="6.3" r="5.6" fill="#d4d0c8" stroke="#000" stroke-width="1.2"/><path d="M2.468,4.34 Q3.42,2.3800000000000003 5.38,1.9320000000000004" stroke="#00e8e8" stroke-width="1.3" fill="none"/><path d="M10.532,8.26 Q9.58,10.219999999999999 7.62,10.668" stroke="#00e8e8" stroke-width="1.3" fill="none"/><path d="M3.2,6.3 H9.8" stroke="#000" stroke-width="1.2"/></g>
<g transform="translate(250,80.8) scale(1)"><path d="M11.28,9.28 L16.2,15.8" stroke="#000" stroke-width="2.6" stroke-linecap="butt"/><circle cx="7.5" cy="5.5" r="5.4" fill="#d4d0c8" stroke="#000" stroke-width="1.2"/><path d="M3.612,3.6100000000000003 Q4.529999999999999,1.7200000000000002 6.42,1.2879999999999994" stroke="#00e8e8" stroke-width="1.3" fill="none"/><path d="M11.388,7.39 Q10.47,9.28 8.58,9.712" stroke="#00e8e8" stroke-width="1.3" fill="none"/><path d="M1,0.5 L11,15 M13,1 L1.5,11" stroke="#ff0000" stroke-width="1.3"/><path d="M0,0 l3,0.8 l-2,2 Z M0.5,10 l3,0.3 l-2.6,2.3 Z" fill="#ff0000"/></g>
<g transform="translate(279.3,80.8) scale(1)"><path d="M2.5,0 V16 M2,14.5 H18" stroke="#000" stroke-width="1"/><path d="M0.5,2 h2 M0.5,5 h2 M0.5,8 h2 M0.5,11 h2 M5.5,14.5 v2 M8.5,14.5 v2 M11.5,14.5 v2 M14.5,14.5 v2 M17.5,14.5 v2" stroke="#000" stroke-width="0.8"/><path d="M3,4.5 L6.5,0.8 L10.5,4.2 L13.8,0.8 L17.5,4.5" fill="none" stroke="#2828b0" stroke-width="1"/><path d="M3,7.5 Q5,5 7,6.5 T11,7.5 T14,9 L17.5,6.8" fill="none" stroke="#ff0000" stroke-width="1.1"/><path d="M3,10.8 H8 V12.2 H10 V10.8 H16 V12 H17.5" fill="none" stroke="#000080" stroke-width="1.1"/></g>
<g transform="translate(302.3,80.8) scale(1)"><path d="M2.5,0 V16 M2,14.5 H18" stroke="#000" stroke-width="1"/><path d="M0.5,2 h2 M0.5,5 h2 M0.5,8 h2 M0.5,11 h2 M5.5,14.5 v2 M8.5,14.5 v2 M11.5,14.5 v2 M14.5,14.5 v2 M17.5,14.5 v2" stroke="#000" stroke-width="0.8"/><path d="M7,4.5 L14,0.8 M7,10.5 L14,13.5" stroke="#ff2020" stroke-width="1.1"/><path d="M6.5,4.5 V10.5 M15,1 V13.5" stroke="#000" stroke-width="1"/><path d="M5,6 L6.5,4 L8,6 Z M5,9 L6.5,11 L8,9 Z M13.3,3 L15,0.8 L16.7,3 Z M13.3,11.5 L15,13.8 L16.7,11.5 Z" fill="#000"/></g>
<g transform="translate(331,81) scale(1)"><rect x="0.5" y="0.5" width="17.5" height="8" fill="#d4d0c8" stroke="#000080" stroke-width="1"/><rect x="0.5" y="0.5" width="17.5" height="2.6" fill="#000080"/><rect x="1.5" y="1.3" width="1.2" height="0.9" fill="#fff"/><rect x="0.5" y="8.5" width="17.5" height="8" fill="#d4d0c8" stroke="#000080" stroke-width="1"/><rect x="0.5" y="8.5" width="17.5" height="2.6" fill="#000080"/><rect x="1.5" y="9.3" width="1.2" height="0.9" fill="#fff"/><rect x="13.5" y="1.3" width="2.6" height="0.9" fill="#fff"/><rect x="13.5" y="9.3" width="2.6" height="0.9" fill="#fff"/></g>
<g transform="translate(354.5,81) scale(1)"><rect x="0.5" y="0.5" width="10.5" height="8" fill="#d4d0c8" stroke="#000080" stroke-width="1"/><rect x="0.5" y="0.5" width="10.5" height="2.6" fill="#000080"/><rect x="1.5" y="1.3" width="1.2" height="0.9" fill="#fff"/><rect x="4" y="4.5" width="10.5" height="8" fill="#d4d0c8" stroke="#000080" stroke-width="1"/><rect x="4" y="4.5" width="10.5" height="2.6" fill="#000080"/><rect x="5" y="5.3" width="1.2" height="0.9" fill="#fff"/><rect x="7" y="8.8" width="10.5" height="7.5" fill="#d4d0c8" stroke="#000080" stroke-width="1"/><rect x="7" y="8.8" width="10.5" height="2.6" fill="#000080"/><rect x="8" y="9.600000000000001" width="1.2" height="0.9" fill="#fff"/></g>
<g transform="translate(378,81) scale(1)"><rect x="0.5" y="0.5" width="8.5" height="8" fill="#d4d0c8" stroke="#000080" stroke-width="1"/><rect x="0.5" y="0.5" width="8.5" height="2.6" fill="#000080"/><rect x="1.5" y="1.3" width="1.2" height="0.9" fill="#fff"/><rect x="3.5" y="4.5" width="8.5" height="8" fill="#d4d0c8" stroke="#000080" stroke-width="1"/><rect x="3.5" y="4.5" width="8.5" height="2.6" fill="#000080"/><rect x="4.5" y="5.3" width="1.2" height="0.9" fill="#fff"/><rect x="6.5" y="8.8" width="8.5" height="7.5" fill="#d4d0c8" stroke="#000080" stroke-width="1"/><rect x="6.5" y="8.8" width="8.5" height="2.6" fill="#000080"/><rect x="7.5" y="9.600000000000001" width="1.2" height="0.9" fill="#fff"/><path d="M17.5,5 L13.5,1 M13,4 V0.6 H16.6" fill="none" stroke="#000" stroke-width="1.1"/></g>
<g transform="translate(410.5,81) scale(1)"><path d="M3.5,0.5 Q3.5,5 6,9 M8.5,0.5 Q8.5,5 6,9" fill="none" stroke="#000" stroke-width="1.5"/><path d="M6,8 L3.5,11 M6,8 L8.5,11" stroke="#2a2aa0" stroke-width="1.2"/><ellipse cx="2.8" cy="13" rx="1.9" ry="2.6" fill="none" stroke="#2a2aa0" stroke-width="1.3"/><ellipse cx="9" cy="12.5" rx="1.9" ry="2.6" fill="none" stroke="#2a2aa0" stroke-width="1.3"/></g>
<g transform="translate(431,81) scale(1)"><path d="M0.5,0.5 H6 L9.5,4 V11 H0.5 Z" fill="#fff" stroke="#000" stroke-width="0.9"/><path d="M2,4 h3 M2,6 h5 M2,8 h5" stroke="#606060" stroke-width="0.9"/><path d="M7.5,4.5 H13 L16.5,8 V15.5 H7.5 Z" fill="#fff" stroke="#2020a0" stroke-width="1"/><path d="M9,8.5 h3.5 M9,10.5 h6 M9,12.5 h6 M9,14 h6" stroke="#606060" stroke-width="0.9"/></g>
<g transform="translate(455,81) scale(1)"><g transform="translate(1,1)"><path d="M0.5,3 H5 V1.2 Q7.5,-0.3 10,1.2 V3 H14.5 V13 H16.5 V16 H8 V13.5 H0.5 Z" fill="#ffffff"/></g><path d="M0.5,3 H5 V1.2 Q7.5,-0.3 10,1.2 V3 H14.5 V13 H16.5 V16 H8 V13.5 H0.5 Z" fill="#808080"/><path d="M5,3.3 Q7.5,1.6 10,3.3" stroke="#d4d0c8" stroke-width="0.8" fill="none"/></g>
<g transform="translate(477,81.5) scale(1)"><path d="M3.5,0.8 h3 v3 l1.5,2 h1.5 l1.5,-2 v-3 h3 v3.5 l3,4 v7 h-5.5 v-5 l-1,-1.5 h-1.5 l-1,1.5 v5 h-5.5 v-7 l2.500,-4 Z" fill="#000"/><path d="M4.5,2 v1.5 M12,2 v1.5 M2,9 v4 M4,10 v4 M12.5,9.5 v4 M14.5,10.5 v3" stroke="#c8c8c8" stroke-width="0.7"/></g>
<g transform="translate(507,82) scale(1)"><path d="M4.5,0.5 H10.5 L13.5,3.5 V5.5 H4.5 Z" fill="#e8e8e8" stroke="#000" stroke-width="0.9"/><path d="M3,5.5 H14.5 Q16.3,5.5 16.3,7.5 V12.5 H13 V15 H4.500 V12.500 H0.7 V9 Q1,5.800 3,5.500 Z" fill="#d8d8d8" stroke="#000" stroke-width="1"/><path d="M4.5,12.500 H13" stroke="#000" stroke-width="1"/><path d="M2.5,7.5 h12 M2.5,9.5 h12 M2.5,11 h12" stroke="#a8a8a8" stroke-width="0.7" stroke-dasharray="1.3,1.3"/></g>
<g transform="translate(528.8,81) scale(1)"><path d="M6.500,0.500 H17 L13,5.500 H2.500 Z" fill="#fff" stroke="#000" stroke-width="1"/><path d="M7.500,2 H14 L12.500,4 H6 Z" fill="#808080"/><path d="M0.600,7.500 L3,5.500 H14 L17.500,4.500 V12.500 L14,16.300 H0.600 Z" fill="#fff" stroke="#000" stroke-width="1"/><path d="M0.600,7.500 H14 L17.500,4.500 M14,7.500 V16.300 M0.600,12.500 H14 L17.500,9" fill="none" stroke="#000" stroke-width="1"/><rect x="7" y="9.300" width="3.500" height="1.500" fill="#d8d020"/></g>
<g transform="translate(560,81) scale(1)"><g transform="translate(1,1)"><path d="M6,0.800 Q8,-0.600 9.800,1.200 L3.800,11.500 L0.600,13.600 L0.800,9.500 Z" fill="#ffffff"/><path d="M0.800,14.500 H15.800" stroke="#ffffff" stroke-width="1"/></g><path d="M6,0.800 Q8,-0.600 9.800,1.200 L3.800,11.500 L0.600,13.600 L0.800,9.500 Z" fill="#808080"/><path d="M0.800,14.500 H15.800" stroke="#808080" stroke-width="1"/></g>
<g transform="translate(581,81) scale(1)"><g transform="translate(1,1)"><path d="M8.600,0.500 V8.500 M0.300,8.500 H17 L8.600,16 Z" fill="none" stroke="#ffffff" stroke-width="1.100"/></g><path d="M8.600,0.500 V8.500 M0.300,8.500 H17 L8.600,16 Z" fill="none" stroke="#808080" stroke-width="1.100"/></g>
<g transform="translate(604.3,81) scale(1)"><g transform="translate(1,1)"><rect x="0.600" y="1.400" width="16" height="9.800" rx="1.800" fill="none" stroke="#ffffff" stroke-width="1.700"/><path d="M8.500,11.200 V16.300" stroke="#ffffff" stroke-width="1.200"/><path d="M6.300,9 V5 Q6.300,3.500 8.500,3.500 Q10.700,3.500 10.700,5 V9 M6.300,6.800 H10.700" fill="none" stroke="#ffffff" stroke-width="1.300"/></g><rect x="0.600" y="1.400" width="16" height="9.800" rx="1.800" fill="none" stroke="#808080" stroke-width="1.700"/><path d="M8.500,11.200 V16.300" stroke="#808080" stroke-width="1.200"/><path d="M6.300,9 V5 Q6.300,3.500 8.500,3.500 Q10.700,3.500 10.700,5 V9 M6.300,6.800 H10.700" fill="none" stroke="#808080" stroke-width="1.300"/></g>
<g transform="translate(630,81) scale(1)"><g transform="translate(1,1)"><path d="M6,0.500 V2 L11.700,5.600 L0.400,11 L6,14.500 V16.400" fill="none" stroke="#ffffff" stroke-width="1.100"/></g><path d="M6,0.500 V2 L11.700,5.600 L0.400,11 L6,14.500 V16.400" fill="none" stroke="#808080" stroke-width="1.100"/></g>
<g transform="translate(652.8,81) scale(1)"><g transform="translate(1,1)"><path d="M6,0.500 V6 M6,11 V16.500" fill="none" stroke="#ffffff" stroke-width="1.200"/><path d="M0,6.500 H12 M0,10.800 H12" fill="none" stroke="#ffffff" stroke-width="1.800"/></g><path d="M6,0.500 V6 M6,11 V16.500" fill="none" stroke="#808080" stroke-width="1.200"/><path d="M0,6.500 H12 M0,10.800 H12" fill="none" stroke="#808080" stroke-width="1.800"/></g>
<g transform="translate(679,81) scale(1)"><g transform="translate(1,1)"><path d="M0.300,0.600 Q6.500,0.600 6.300,4.500 Q6.300,8 1,8.300 Q6.500,8.500 6.300,12.300 Q6,16 0.300,16.300" fill="none" stroke="#ffffff" stroke-width="1.100"/></g><path d="M0.300,0.600 Q6.500,0.600 6.300,4.500 Q6.300,8 1,8.300 Q6.500,8.500 6.300,12.300 Q6,16 0.300,16.300" fill="none" stroke="#808080" stroke-width="1.100"/></g>
<g transform="translate(698,81) scale(1)"><g transform="translate(1,1)"><path d="M8.200,0.500 V16.500 M0.300,4 H16.600 L8.200,12.200 Z M0.300,12.600 H16.600" fill="none" stroke="#ffffff" stroke-width="1.100"/></g><path d="M8.200,0.500 V16.500 M0.300,4 H16.600 L8.200,12.200 Z M0.300,12.600 H16.600" fill="none" stroke="#808080" stroke-width="1.100"/></g>
<g transform="translate(720,83.7) scale(1)"><g transform="translate(1,1)"><path d="M3.300,0.600 H7 Q13.300,0.600 13.300,5.800 Q13.300,11 7,11 H3.300 Z" fill="none" stroke="#ffffff" stroke-width="1.200"/><path d="M0,3 H3.300 M0,8.600 H3.300 M15,5.800 H18" stroke="#ffffff" stroke-width="1.100"/><circle cx="14.300" cy="5.800" r="1" fill="none" stroke="#ffffff" stroke-width="0.900"/></g><path d="M3.300,0.600 H7 Q13.300,0.600 13.300,5.800 Q13.300,11 7,11 H3.300 Z" fill="none" stroke="#808080" stroke-width="1.200"/><path d="M0,3 H3.300 M0,8.600 H3.300 M15,5.800 H18" stroke="#808080" stroke-width="1.100"/><circle cx="14.300" cy="5.800" r="1" fill="none" stroke="#808080" stroke-width="0.900"/></g>
<g transform="translate(743.3,81) scale(1)"><g transform="translate(1,1)"><path d="M5,16.300 V13 L1.500,10 Q0.300,8.300 2,7.800 L4,9 L2.500,4 Q2.800,2.500 4,3.200 L5.500,6.500 L5.200,1.500 Q6,0 7.200,1.200 L8,6 L9.200,1 Q10.500,-0.300 11.300,1.200 L10.800,6.500 L13,3 Q14.500,2.300 14.800,3.800 L13,9 L16,6.800 Q17.800,6.800 17,8.500 L12.500,13.500 V16.300 Z" fill="#ffffff"/></g><path d="M5,16.300 V13 L1.500,10 Q0.300,8.300 2,7.800 L4,9 L2.500,4 Q2.800,2.500 4,3.200 L5.500,6.500 L5.200,1.500 Q6,0 7.200,1.200 L8,6 L9.200,1 Q10.500,-0.300 11.300,1.200 L10.800,6.500 L13,3 Q14.500,2.300 14.800,3.800 L13,9 L16,6.800 Q17.800,6.800 17,8.500 L12.500,13.500 V16.300 Z" fill="#808080"/></g>
<g transform="translate(767,83.7) scale(1)"><g transform="translate(1,1)"><path d="M4.500,13.500 V10.500 L1,8 Q-0.300,6 1.500,5.800 L3.500,6.800 V3 Q4,1.300 5.500,2 Q6.300,0 8,1.200 Q9.500,-0.200 10.800,1.200 Q12.800,0.500 13,2.500 Q15,2.500 14.800,4.500 V8 L12,11 V13.500 Z" fill="#ffffff"/></g><path d="M4.500,13.500 V10.500 L1,8 Q-0.300,6 1.500,5.800 L3.500,6.800 V3 Q4,1.300 5.500,2 Q6.300,0 8,1.200 Q9.500,-0.200 10.800,1.200 Q12.800,0.500 13,2.500 Q15,2.500 14.800,4.500 V8 L12,11 V13.500 Z" fill="#808080"/></g>
<g transform="translate(791,81) scale(1)"><path d="M3,8.500 Q3.500,3.200 8.800,3 Q14.500,3.500 14.300,9 Q14,14.300 8.500,14.500 Q6.500,14.500 5,13.300" fill="none" stroke="#000" stroke-width="1.200"/><path d="M5.500,3.900 Q8.500,2.300 12,4.300" fill="none" stroke="#707000" stroke-width="1.200"/><path d="M0,5.500 L6,7 L2.500,11 Z" fill="#000"/></g>
<g transform="translate(813.5,81) scale(1)"><g transform="translate(1,1)"><path d="M13.500,8.500 Q13,3.200 7.700,3 Q2,3.500 2.200,9 Q2.500,14.300 8,14.500 Q10,14.500 11.500,13.300" fill="none" stroke="#ffffff" stroke-width="1.200"/><path d="M16.500,5.500 L10.500,7 L14,11 Z" fill="#ffffff"/></g><path d="M13.500,8.500 Q13,3.200 7.700,3 Q2,3.500 2.200,9 Q2.500,14.300 8,14.500 Q10,14.500 11.500,13.300" fill="none" stroke="#808080" stroke-width="1.200"/><path d="M16.500,5.500 L10.500,7 L14,11 Z" fill="#808080"/></g>
<g transform="translate(835.5,80.5) scale(1)"><g transform="translate(1,1)"><path d="M5.500,6.500 H0.800 V16 H5.500 M0.800,11 H4.500" fill="none" stroke="#ffffff" stroke-width="1.900"/><path d="M8,8.500 H17.500 V13 M12.800,8.500 V12 M8,8.500 V13" fill="none" stroke="#ffffff" stroke-width="1.900"/><path d="M2.500,4.500 L5.500,1 H14 L15,3.500" fill="none" stroke="#ffffff" stroke-width="0.900"/><path d="M13,3 L16.500,3 L15,5.500 Z" fill="#ffffff"/></g><path d="M5.500,6.500 H0.800 V16 H5.500 M0.800,11 H4.500" fill="none" stroke="#808080" stroke-width="1.900"/><path d="M8,8.500 H17.500 V13 M12.800,8.500 V12 M8,8.500 V13" fill="none" stroke="#808080" stroke-width="1.900"/><path d="M2.500,4.500 L5.500,1 H14 L15,3.500" fill="none" stroke="#808080" stroke-width="0.900"/><path d="M13,3 L16.500,3 L15,5.500 Z" fill="#808080"/></g>
<g transform="translate(859.5,80.5) scale(1)"><g transform="translate(1,1)"><path d="M5.500,6.500 H0.800 V16 H5.500 M0.800,11 H4.500" fill="none" stroke="#ffffff" stroke-width="1.900"/><path d="M12.500,6.500 H17.200 V16 H12.500 M17.200,11 H13.500" fill="none" stroke="#ffffff" stroke-width="1.900"/><path d="M2.500,4.500 L5.500,1 H14 L15.500,3.500" fill="none" stroke="#ffffff" stroke-width="0.900"/><path d="M13.500,3 L17,3 L15.500,5.500 Z" fill="#ffffff"/></g><path d="M5.500,6.500 H0.800 V16 H5.500 M0.800,11 H4.500" fill="none" stroke="#808080" stroke-width="1.900"/><path d="M12.500,6.500 H17.200 V16 H12.500 M17.200,11 H13.500" fill="none" stroke="#808080" stroke-width="1.900"/><path d="M2.500,4.500 L5.500,1 H14 L15.500,3.500" fill="none" stroke="#808080" stroke-width="0.900"/><path d="M13.500,3 L17,3 L15.500,5.500 Z" fill="#808080"/></g>
<text x="883.800" y="96.300" font-family="Liberation Serif,serif" font-style="italic" font-weight="bold" font-size="12.500" fill="#fff" textLength="15.500" lengthAdjust="spacingAndGlyphs">Aa</text>
<text x="882.800" y="95.300" font-family="Liberation Serif,serif" font-style="italic" font-weight="bold" font-size="12.500" fill="#6c6c6c" textLength="15.500" lengthAdjust="spacingAndGlyphs">Aa</text>
<text x="907" y="94.800" font-family="Liberation Sans,sans-serif" font-weight="bold" font-size="10.500" fill="#fff" textLength="15" lengthAdjust="spacingAndGlyphs">.op</text>
<text x="906" y="93.800" font-family="Liberation Sans,sans-serif" font-weight="bold" font-size="10.500" fill="#6c6c6c" textLength="15" lengthAdjust="spacingAndGlyphs">.op</text>
<g transform="translate(6.5,47.5) scale(1.0)"><path d="M0.500,0.500 H11.500 L9.500,6.500 L1,12 Z" fill="#0a246a" stroke="#000" stroke-width="1"/><path d="M4.500,2.500 L3,6.500 H6.500 M7.500,2 H10.500 L9,6" fill="none" stroke="#b00000" stroke-width="1"/></g>
<g transform="translate(6,62) scale(1.0)"><path d="M0.800,0 V12 M0,11 H12" stroke="#000" stroke-width="1.500" stroke-dasharray="1.5,1"/><path d="M1,3.500 L3.500,0.800 L6,3 L9,0.800 L11.800,3.500" fill="none" stroke="#2020c0" stroke-width="1.100"/><path d="M1,6 Q3,4.500 5,6 T9,6.300 L11.500,5.500" fill="none" stroke="#e01010" stroke-width="1.200"/><path d="M1.500,9.500 H11.500" stroke="#000080" stroke-width="1.300"/><path d="M4.300,0 H7.800 L6.800,8 H5.300 Z" fill="#ffff00"/><rect x="5" y="9.300" width="2.200" height="2.400" fill="#ffff00"/></g>
<g transform="translate(13.3,105.2) scale(1.12)"><path d="M0,3.500 H3.500 M3.500,0.500 V7.500 M3.500,2.500 L7.500,0 M3.500,5 L7,9.500" fill="none" stroke="#1010e8" stroke-width="1.200"/><path d="M7.500,10.500 L4.800,9 L7,7.300 Z" fill="#1010e8"/></g>
<g transform="translate(96.5,104.5) scale(1.0)"><rect x="1.500" y="0" width="11" height="10.500" fill="#c0bdb6"/><path d="M1.500,0 V11 M1,10.500 H13" stroke="#000" stroke-width="1" stroke-dasharray="1,0.800"/><path d="M2.500,7 Q4,2.500 6,4.500 T9.500,4.500 L12,2" fill="none" stroke="#f01010" stroke-width="1.300"/></g>
<rect x="1395" y="48" width="11.5" height="10.5" fill="#d4d0c8"/><path d="M1395.5,58.0 V48.5 H1406.0" fill="none" stroke="#fff" stroke-width="1"/><path d="M1395.5,58.0 H1406.0 V48.5" fill="none" stroke="#404040" stroke-width="1"/><rect x="1397.5" y="55.2" width="5.175" height="1.600" fill="#000"/><rect x="1407" y="48" width="12" height="10.5" fill="#d4d0c8"/><path d="M1407.5,58.0 V48.5 H1418.5" fill="none" stroke="#fff" stroke-width="1"/><path d="M1407.5,58.0 H1418.5 V48.5" fill="none" stroke="#404040" stroke-width="1"/><rect x="1411.2" y="49.8" width="5" height="4.5" fill="none" stroke="#000" stroke-width="1"/><rect x="1411.2" y="49.5" width="5" height="1.500" fill="#000"/><rect x="1409.5" y="52.3" width="5" height="4.0" fill="#d4d0c8" stroke="#000" stroke-width="1"/><rect x="1409.5" y="52" width="5" height="1.500" fill="#000"/><rect x="1421" y="48" width="11.5" height="10.5" fill="#d4d0c8"/><path d="M1421.5,58.0 V48.5 H1432.0" fill="none" stroke="#fff" stroke-width="1"/><path d="M1421.5,58.0 H1432.0 V48.5" fill="none" stroke="#404040" stroke-width="1"/><path d="M1424,50.5 L1429.0,56.0 M1429.0,50.5 L1424,56.0" stroke="#000" stroke-width="1.500"/>
<rect x="1401" y="63" width="10" height="9" fill="#d4d0c8"/><path d="M1401.5,71.5 V63.5 H1410.5" fill="none" stroke="#fff" stroke-width="1"/><path d="M1401.5,71.5 H1410.5 V63.5" fill="none" stroke="#404040" stroke-width="1"/><rect x="1403.5" y="68.7" width="4.5" height="1.600" fill="#000"/><rect x="1412" y="63" width="10" height="9" fill="#d4d0c8"/><path d="M1412.5,71.5 V63.5 H1421.5" fill="none" stroke="#fff" stroke-width="1"/><path d="M1412.5,71.5 H1421.5 V63.5" fill="none" stroke="#404040" stroke-width="1"/><rect x="1416.2" y="64.8" width="3" height="3" fill="none" stroke="#000" stroke-width="1"/><rect x="1416.2" y="64.5" width="3" height="1.500" fill="#000"/><rect x="1414.5" y="67.3" width="3" height="2.5" fill="#d4d0c8" stroke="#000" stroke-width="1"/><rect x="1414.5" y="67" width="3" height="1.500" fill="#000"/><rect x="1423" y="63" width="10" height="9" fill="#d4d0c8"/><path d="M1423.5,71.5 V63.5 H1432.5" fill="none" stroke="#fff" stroke-width="1"/><path d="M1423.5,71.5 H1432.5 V63.5" fill="none" stroke="#404040" stroke-width="1"/><path d="M1426,65.5 L1429.5,69.5 M1429.5,65.5 L1426,69.5" stroke="#000" stroke-width="1.500"/>
<rect x="1384" y="14" width="8.500" height="2.300" fill="#e8e8e8"/>
<rect x="1403.500" y="9" width="7.500" height="7" fill="none" stroke="#e8e8e8" stroke-width="1.300"/><rect x="1403" y="8" width="8.500" height="2" fill="#e8e8e8"/>
<path d="M1422.500,9 L1430,16 M1430,9 L1422.500,16" stroke="#f0f0f0" stroke-width="2.300"/>
<g transform="translate(5,4) scale(1.0)"><g transform="scale(1.0)"><rect x="0" y="0" width="16" height="16" rx="2" fill="#fff"/><path d="M1.800,2.800 L5.200,13 L8.600,2.800" fill="none" stroke="#ff2a2a" stroke-width="1.900"/><path d="M10.300,7.800 V3.600 M10.300,5.200 Q12.400,2.400 14.200,4.300 V7.800" fill="none" stroke="#18b018" stroke-width="1.500"/><path d="M14.500,9.800 Q10.300,8.800 10.500,11.800 Q10.800,14.300 14.500,13.500" fill="none" stroke="#2850ff" stroke-width="1.500"/></g></g>
</svg>
<div class="t ax" style="left:0px;width:30.8px;text-align:right;top:127.2px">0.0A</div>
<div class="t ax" style="left:0px;width:30.8px;text-align:right;top:193.6px">-0.1A</div>
<div class="t ax" style="left:0px;width:30.8px;text-align:right;top:260.0px">-0.2A</div>
<div class="t ax" style="left:0px;width:30.8px;text-align:right;top:326.4px">-0.3A</div>
<div class="t ax" style="left:0px;width:30.8px;text-align:right;top:392.8px">-0.4A</div>
<div class="t ax" style="left:0px;width:30.8px;text-align:right;top:459.2px">-0.5A</div>
<div class="t ax" style="left:0px;width:30.8px;text-align:right;top:525.6px">-0.6A</div>
<div class="t ax" style="left:0px;width:30.8px;text-align:right;top:592.0px">-0.7A</div>
<div class="t ax" style="left:0px;width:30.8px;text-align:right;top:658.4px">-0.8A</div>
<div class="t ax" style="left:0px;width:30.8px;text-align:right;top:724.8px">-0.9A</div>
<div class="t ax" style="left:0px;width:30.8px;text-align:right;top:791.2px">-1.0A</div>
<div class="t ax" style="left:17px;top:803.2px">928.8ms</div>
<div class="t ax" style="left:112.3px;width:60px;text-align:center;top:803.2px">929.0ms</div>
<div class="t ax" style="left:218.2px;width:60px;text-align:center;top:803.2px">929.2ms</div>
<div class="t ax" style="left:324.0px;width:60px;text-align:center;top:803.2px">929.4ms</div>
<div class="t ax" style="left:429.9px;width:60px;text-align:center;top:803.2px">929.6ms</div>
<div class="t ax" style="left:535.7px;width:60px;text-align:center;top:803.2px">929.8ms</div>
<div class="t ax" style="left:641.6px;width:60px;text-align:center;top:803.2px">930.0ms</div>
<div class="t ax" style="left:747.4px;width:60px;text-align:center;top:803.2px">930.2ms</div>
<div class="t ax" style="left:853.3px;width:60px;text-align:center;top:803.2px">930.4ms</div>
<div class="t ax" style="left:959.1px;width:60px;text-align:center;top:803.2px">930.6ms</div>
<div class="t ax" style="left:1065.0px;width:60px;text-align:center;top:803.2px">930.8ms</div>
<div class="t ax" style="left:1170.8px;width:60px;text-align:center;top:803.2px">931.0ms</div>
<div class="t ax" style="left:1276.7px;width:60px;text-align:center;top:803.2px">931.2ms</div>
<div class="t ax" style="left:1393.5px;top:803.2px">931.4ms</div>
<div class="t" style="left:369.5px;top:120.300px;font-family:'Liberation Sans',sans-serif;font-weight:bold;font-size:9.600px;color:#00c800">I(R8)</div>
<div class="t" style="left:1057px;top:120.300px;font-family:'Liberation Sans',sans-serif;font-weight:bold;font-size:9.600px;color:#0000b0">I(R7)</div>
<div class="a" style="left:7px;top:815px;width:1426px;height:1px;background:#fff"></div>
<div class="a" style="left:1392px;top:819px;width:41px;height:11px;border:1px solid #808080;border-right-color:#fff;border-bottom-color:#fff"></div>
<div class="a" style="left:3px;top:832px;width:1434px;height:19px;background:#e9e9e9;border-top:1px solid #4c4e50"></div>
<div class="a" style="left:494.5px;top:833.5px;width:168px;height:17px;background:#dadad6;border:1px solid #c4c4c0;border-radius:2.500px"></div>
<div class="t" style="left:181.7px;top:837px;font-size:9.65px;color:#5a5a5a;letter-spacing:-0.021px;">[07 - Spiral Architect.mp3]</div>
<div class="t" style="left:349px;top:837px;font-size:9.65px;color:#3a3a3a;letter-spacing:-0.240px;">CAD</div>
<div class="t" style="left:516.3px;top:837px;font-size:9.65px;color:#4a4a4a;letter-spacing:0.076px;">LTspice XVII - [bokarev_16.r...</div>
<div class="t" style="left:1271px;top:837px;font-size:9.65px;color:#444;">1</div>
<div class="t" style="left:1286px;top:837px;font-size:9.65px;color:#444;letter-spacing:-0.250px;">GHz</div>
<div class="t" style="left:1320.8px;top:837px;font-size:9.65px;color:#444;letter-spacing:-0.055px;">5 °C</div>
<div class="t" style="left:1350.8px;top:837px;font-size:9.65px;color:#444;letter-spacing:-0.133px;">Вт, 30 мар, 02:19</div>
<div class="a" style="left:0;top:876px;width:1440px;height:24px;background:#ececec"></div>
<div class="a" style="left:34px;top:876px;width:22px;height:24px;background:#f8f8f8;border-radius:2px"></div>
<div class="a" style="left:947px;top:876px;width:27px;height:24px;background:#f6f6f6;border-radius:2px"></div>
<div class="a" style="left:506.500px;top:876.500px;width:147px;height:23.500px;background:#dcdcda;border:1px solid #b4b4b0;border-radius:3px"></div>
<div class="t" style="left:241.5px;top:880.5px;font-size:13.33px;color:#3c3c3c;letter-spacing:-0.444px;">[Record]</div>
<div class="t" style="left:388.4px;top:880.5px;font-size:13.33px;color:#3c3c3c;letter-spacing:-0.215px;">Германиевые ...</div>
<div class="t" style="left:535.5px;top:880.5px;font-size:13.33px;color:#3c3c3c;letter-spacing:-0.123px;">yes - VNC Viewer</div>
<div class="t" style="left:682px;top:880.5px;font-size:13.33px;color:#3c3c3c;letter-spacing:-0.390px;">[11]</div>
<div class="t" style="left:829.5px;top:880.5px;font-size:13.33px;color:#3c3c3c;letter-spacing:-0.205px;">[*[Снимок экр...</div>
<div class="t" style="left:1208px;top:880.5px;font-size:13.33px;color:#3c3c3c;letter-spacing:-0.797px;">1,46</div>
<div class="t" style="left:1238px;top:880.5px;font-size:13.33px;color:#3c3c3c;letter-spacing:-0.536px;">GHz</div>
<div class="t" style="left:1285px;top:880.5px;font-size:13.33px;color:#3c3c3c;letter-spacing:-0.422px;">5 °C</div>
<div class="t" style="left:1324.5px;top:880.5px;font-size:13.33px;color:#3c3c3c;letter-spacing:-0.392px;">Вт, 30 мар, 02:19</div>
<svg width="1440" height="900" viewBox="0 0 1440 900">
<g transform="translate(5.5,833.8) scale(0.735)"><g fill="#3a3c3a"><path d="M1.700,11.800 C1.800,8.500 5.500,7.300 9,7.600 C12.500,7.800 15,9.300 14.600,11.800 C14.300,13.600 12,14 10.800,14.600 C9.800,15.200 10.300,16 11.500,15.700 C13.200,15.200 14.300,16.300 13.900,17.800 C13.300,20 11.500,21.200 9,21.200 C6,21 4,18.800 2.800,16.200 C2,14.500 1.700,13.300 1.700,11.800 Z"/><ellipse cx="0.900" cy="7.200" rx="1.150" ry="1.800" transform="rotate(-30 0.900 7.200)"/><ellipse cx="4" cy="4.600" rx="1.350" ry="2.100" transform="rotate(-20 4 4.600)"/><ellipse cx="8.300" cy="3.400" rx="1.550" ry="2.300" transform="rotate(-5 8.300 3.400)"/><path d="M11.800,4.800 C11.800,2.800 14.500,0.800 17,0.600 C18.800,0.600 19.800,1.500 19.900,2.400 L18.600,1.900 C17.500,2 17.200,2.800 16.300,3.900 C15.200,5.300 14,6.300 12.900,6.200 C12.100,6.100 11.800,5.500 11.800,4.800 Z"/></g></g>
<path d="M25.500,833 V851" stroke="#8c8e8c" stroke-width="1"/><path d="M26.500,833 V851" stroke="#fafafa" stroke-width="1"/>
<g transform="translate(28.5,834.6) scale(0.7497)"><path d="M0.600,3 Q0.600,1 2.600,0.900 H6.800 Q8.200,0.900 8.700,2 L9.200,3 H18 Q19.600,3 19.600,4.600 V15.300 Q19.600,16.700 18,16.700 H2.200 Q0.600,16.700 0.600,15.300 Z" fill="#5b8fd6" stroke="#2f62ac" stroke-width="0.900"/><path d="M1.200,2.800 Q1.200,1.500 2.600,1.500 H6.800 Q7.700,1.500 8.100,2.300 L8.500,3.200 H1.200 Z" fill="#8db6ea"/><path d="M1.200,5 H19 V15.300 Q19,16.100 18,16.100 H2.200 Q1.200,16.100 1.200,15.300 Z" fill="#79a7e3"/><rect x="8" y="7.800" width="4.200" height="5.600" rx="1" fill="none" stroke="#2b5cab" stroke-width="1.300"/><path d="M5,9 v-1.800 h1.800 M5,12.200 v1.800 h1.800 M15.200,9 v-1.800 h-1.800 M15.200,12.200 v1.800 h-1.800" fill="none" stroke="#2b5cab" stroke-width="1.200"/></g>
<g transform="translate(46,835) scale(0.7644)"><rect x="0.500" y="0.300" width="19" height="17" rx="1.800" fill="#4e504d" stroke="#2a2c2a" stroke-width="1"/><rect x="2.200" y="1.900" width="15.600" height="11" rx="0.600" fill="#2b2d2b" stroke="#787a76" stroke-width="0.600"/><path d="M2.500,3.500 h15 M2.500,5.500 h15 M2.500,7.500 h15 M2.500,9.500 h15 M2.500,11.500 h15" stroke="#50524f" stroke-width="0.800"/><path d="M5,5.800 L7.800,8.300 L5,10.800" fill="none" stroke="#fff" stroke-width="1.200"/><path d="M8.500,11 h3" stroke="#fff" stroke-width="1.200"/><rect x="1.500" y="13.600" width="17" height="2.300" fill="#80827e"/><rect x="2.200" y="14.100" width="2" height="1.200" fill="#73d216"/><rect x="13" y="14.300" width="1.800" height="0.800" fill="#3a3c3a"/><rect x="15.500" y="14.300" width="1.800" height="0.800" fill="#3a3c3a"/></g>
<g transform="translate(65,834.4) scale(0.7497)"><path d="M2.800,0.500 H15.200 Q16.200,0.500 16.600,1.500 L17.600,4.500 V19 Q17.600,20 16.600,20 H1.400 Q0.400,20 0.400,19 V4.500 L1.400,1.500 Q1.800,0.500 2.800,0.500 Z" fill="#eeeeec" stroke="#8c8e8a" stroke-width="0.900"/><path d="M1.200,4.800 H16.800" stroke="#c0c2be" stroke-width="0.800"/><rect x="2.800" y="6.300" width="12.400" height="5.400" rx="0.800" fill="#d3d7cf" stroke="#8c8e8a" stroke-width="0.800"/><rect x="2.800" y="12.900" width="12.400" height="5.400" rx="0.800" fill="#d3d7cf" stroke="#8c8e8a" stroke-width="0.800"/><rect x="7" y="8.300" width="4" height="1.500" fill="#70726e"/><rect x="7" y="14.900" width="4" height="1.500" fill="#70726e"/></g>
<g transform="translate(83,834) scale(0.735)"><rect x="0.500" y="0.500" width="17.400" height="19.300" rx="1.300" fill="#787a76" stroke="#2e302e" stroke-width="1"/><rect x="1" y="1" width="16.400" height="1.500" fill="#555753"/><rect x="1.800" y="2.800" width="14.800" height="4.200" rx="0.600" fill="#8ae234" stroke="#4e9a06" stroke-width="0.500"/><rect x="3.500" y="4" width="11.500" height="1.800" fill="#b8f080"/><rect x="3.1" y="9.0" width="1.300" height="1.200" fill="#f0f0ee"/><rect x="6.2" y="9.0" width="1.300" height="1.200" fill="#f0f0ee"/><rect x="9.3" y="9.0" width="1.300" height="1.200" fill="#f0f0ee"/><rect x="12.4" y="9.0" width="1.300" height="1.200" fill="#f0f0ee"/><rect x="3.1" y="11.7" width="1.300" height="1.200" fill="#f0f0ee"/><rect x="6.2" y="11.7" width="1.300" height="1.200" fill="#f0f0ee"/><rect x="9.3" y="11.7" width="1.300" height="1.200" fill="#f0f0ee"/><rect x="12.4" y="11.7" width="1.300" height="1.200" fill="#f0f0ee"/><rect x="3.1" y="14.4" width="1.300" height="1.200" fill="#f0f0ee"/><rect x="6.2" y="14.4" width="1.300" height="1.200" fill="#f0f0ee"/><rect x="9.3" y="14.4" width="1.300" height="1.200" fill="#f0f0ee"/><rect x="12.4" y="14.4" width="1.300" height="1.200" fill="#f0f0ee"/><rect x="3.1" y="17.1" width="1.300" height="1.200" fill="#f0f0ee"/><rect x="6.2" y="17.1" width="1.300" height="1.200" fill="#f0f0ee"/><rect x="9.3" y="17.1" width="1.300" height="1.200" fill="#f0f0ee"/><rect x="12.4" y="17.1" width="1.300" height="1.200" fill="#f0f0ee"/><rect x="14.300" y="14" width="2.300" height="4" fill="#60625e"/><path d="M0,20.300 H18.500" stroke="#3a3c3a" stroke-width="1.200" opacity="0.700"/></g>
<g transform="translate(99.8,834.3) scale(0.735)"><rect x="1" y="1" width="18" height="18" fill="#fff" stroke="#006400" stroke-width="2"/><path d="M3.500,4.500 H9 L11,7.300 L13.500,4.500 H17 L13,10 L17.500,15.800 H12 L10,13 L7.500,15.800 H3 L8,10 Z" fill="#006400"/><path d="M5,5 L15.500,15.500" stroke="#a0d8a0" stroke-width="0.700"/></g>
<g transform="translate(117.7,834.3) scale(0.735)"><rect x="1" y="1" width="18" height="18" fill="#fff" stroke="#000080" stroke-width="2"/><path d="M3.300,5.500 H7 L6.800,11.500 L9.800,5.500 H12.300 L12.100,11.500 L15,5.500 H18 L13.500,15.300 H10.300 L10.200,10 L7.800,15.300 H4.500 Z" fill="#000080"/></g>
<g transform="translate(134.3,832.8) scale(0.735)"><circle cx="12" cy="12" r="12" fill="#bccae6"/><circle cx="11.64" cy="11.040000000000001" r="10.8" fill="#c6d6ec"/><circle cx="10.8" cy="9.600000000000001" r="7.4399999999999995" fill="#d2e0f0"/><path d="M1.56,17.4 A12,12 0 0 0 22.44,17.4 Q12,21.0 1.56,17.4 Z" fill="#b4aedc" opacity="0.850"/></g>
<g transform="translate(163.4,836.3) scale(1.0)"><circle cx="6" cy="6" r="5.800" fill="#b8b8b8" stroke="#8c8c8c" stroke-width="0.800"/><path d="M6,10 L2.300,5.500 Q2.300,2.800 4.500,3 L6,4.300 L7.500,3 Q9.700,2.800 9.700,5.500 Z" fill="#fff"/></g>
<g transform="translate(331.7,837) scale(1.0)"><path d="M1,4 L6,1.500 L10.500,3.500 L10.500,9 L5,10.500 L0.500,8.500 Z" fill="#c81818" stroke="#801010" stroke-width="0.800"/><path d="M2,2 L7,5.500 M7.500,1.500 L4,6" stroke="#e8c040" stroke-width="1.200"/><path d="M0.500,6 L5,7.500 L10.500,5.500" fill="none" stroke="#801010" stroke-width="0.800"/></g>
<g transform="translate(498,835.5) scale(1.0)"><path d="M1,0.800 H11.500 L9.500,6 L1.500,11.500 Z" fill="none" stroke="#303030" stroke-width="1.100"/><path d="M4,2.500 L3,6.500 H6.500 M7,2.500 H10 L8.500,6" fill="none" stroke="#901818" stroke-width="1.300"/></g>
<g transform="translate(1107,835) scale(1.0)"><rect x="-1" y="-1.200" width="20" height="15.500" rx="2" fill="#f6f6f6"/><rect x="0.600" y="0.600" width="17" height="11.800" rx="1.500" fill="#8fb4e8" stroke="#3f6fb8" stroke-width="1.100"/><rect x="3" y="1.200" width="12.200" height="5.300" fill="#fafafa"/><path d="M3,1.900 h12.200" stroke="#f08a30" stroke-width="1.200"/><rect x="5" y="8.300" width="8.500" height="3.600" fill="#c8ccd4"/><rect x="7.800" y="9.200" width="2.400" height="2" fill="#50545c"/></g>
<g transform="translate(1133,833) scale(1.0)"><rect x="0" y="0" width="18" height="18" fill="#000"/><path d="M2,3.500 L6,15 L10,3.500" fill="none" stroke="#18c018" stroke-width="2"/><path d="M11.300,8.500 V3.600 M11.300,5.200 Q13.500,2.400 15.700,4.500 V8.500" fill="none" stroke="#3858ff" stroke-width="1.500"/><path d="M16.500,10.500 Q11.500,9.500 11.800,13 Q12,16 16.500,15" fill="none" stroke="#ff2020" stroke-width="1.700"/></g>
<g transform="translate(1153.8,833.3) scale(1.0)"><ellipse cx="6.75" cy="8.75" rx="6.75" ry="8.75" fill="#3a6cb6"/><ellipse cx="6.75" cy="6.65" rx="5.67" ry="5.95" fill="#5a8ed4" opacity="0.550"/><path d="M3.78,5.775 L9.45,11.725 L6.75,14.525 V2.9749999999999996 L9.45,5.775 L3.78,11.725" fill="none" stroke="#fff" stroke-width="1.1475000000000002" stroke-linejoin="miter"/></g>
<g transform="translate(1172.5,834) scale(1.0)"><path d="M6.75,0.300 Q8.37,4.125 12.15,8.25 Q14.580000000000002,12.870000000000001 10.8,15.345 Q6.75,17.16 2.7,15.345 Q-1.08,12.870000000000001 1.35,8.25 Q5.13,4.125 6.75,0.300 Z" fill="#2f5f9c" stroke="#244a80" stroke-width="0.600"/><path d="M6.75,0.99 Q7.5600000000000005,3.63 9.45,5.9399999999999995 Q6.75,4.95 4.05,6.2700000000000005 Q5.94,3.63 6.75,0.99 Z" fill="#7ea6d4" opacity="0.800"/><circle cx="7.0200000000000005" cy="10.725" r="4.32" fill="#a9c9ea"/><circle cx="7.694999999999999" cy="11.22" r="3.375" fill="#6f9fd2"/><circle cx="6.75" cy="10.23" r="1.6199999999999999" fill="#9cc0e6" opacity="0.700"/></g>
<g transform="translate(1189,833) scale(1.0)"><rect x="0" y="0" width="17.7" height="18" fill="#fff"/><rect x="0" y="0.00" width="17.7" height="1.38" fill="#d82030"/><rect x="0" y="2.77" width="17.7" height="1.38" fill="#d82030"/><rect x="0" y="5.54" width="17.7" height="1.38" fill="#d82030"/><rect x="0" y="8.31" width="17.7" height="1.38" fill="#d82030"/><rect x="0" y="11.08" width="17.7" height="1.38" fill="#d82030"/><rect x="0" y="13.85" width="17.7" height="1.38" fill="#d82030"/><rect x="0" y="16.62" width="17.7" height="1.38" fill="#d82030"/><rect x="0" y="0" width="7.965" height="9.9" fill="#283878"/></g>
<g transform="translate(1209,834.3) scale(1.0)"><g transform="scale(0.76)"><path d="M0.300,8 Q0.300,7 1.300,7 H3.800 L8.300,1.500 Q9.500,0.800 9.600,2.300 V19 Q9.500,20.500 8.300,19.800 L3.800,14.500 H1.300 Q0.300,14.500 0.300,13.500 Z" fill="#9a9c98" stroke="#5c5e5a" stroke-width="0.800"/><path d="M4.500,7.500 L8.200,3 V18.300 L4.500,14 Z" fill="#d0d2ce"/><path d="M6.800,2.500 V19" stroke="#70726e" stroke-width="0.900"/><path d="M12.300,8 Q14.300,10.800 12.300,13.800" fill="none" stroke="#5a82c4" stroke-width="1.200"/><path d="M14.800,5.800 Q18,10.800 14.800,16" fill="none" stroke="#7c9cd4" stroke-width="1.200"/></g></g>
<g transform="translate(1231,835) scale(1.0)"><g transform="scale(0.7)"><path d="M1,1 H10 Q10.500,8 5.500,9.500 Q0.500,8 1,1 Z" fill="#f4e8e8" stroke="#b09090" stroke-width="0.700"/><path d="M1.300,4 H9.700 Q9.500,8 5.500,9.200 Q1.500,8 1.300,4 Z" fill="#a01020"/><path d="M5.500,9.500 V16.500 M2.500,17.300 H8.500" stroke="#a09090" stroke-width="1.200"/></g></g>
<g transform="translate(1243,833.7) scale(0.78)"><rect x="2" y="4.500" width="11" height="13" rx="1" fill="#5a6a3a" stroke="#2a3018" stroke-width="0.900"/><rect x="4.500" y="7.500" width="6" height="7" fill="#a8b088"/><path d="M0,7 h2 M0,9.500 h2 M0,12 h2 M0,14.500 h2 M13,7 h2 M13,9.500 h2 M13,12 h2 M13,14.500 h2" stroke="#c8a830" stroke-width="1.200"/><rect x="15.500" y="1" width="7.500" height="19.500" rx="1.500" fill="#fff" stroke="#2a2a2a" stroke-width="1.200"/><rect x="16.300" y="10" width="5.900" height="9.800" fill="#8a80d8"/></g>
<g transform="translate(1307,836.5) scale(1.0)"><circle cx="5.7" cy="5.7" r="5.7" fill="#c4c4c0" stroke="#9c9c98" stroke-width="0.700"/><circle cx="4.845" cy="5.13" r="3.42" fill="#dcdcd8" opacity="0.800"/><circle cx="6.84" cy="3.9899999999999998" r="1.425" fill="#b0b0ac" opacity="0.700"/></g>
<g transform="translate(3.3,876.7) scale(1.0)"><g fill="#3a3c3a"><path d="M1.700,11.800 C1.800,8.500 5.500,7.300 9,7.600 C12.500,7.800 15,9.300 14.600,11.800 C14.300,13.600 12,14 10.800,14.600 C9.800,15.200 10.300,16 11.500,15.700 C13.200,15.200 14.300,16.300 13.900,17.800 C13.300,20 11.500,21.200 9,21.200 C6,21 4,18.800 2.800,16.200 C2,14.500 1.700,13.300 1.700,11.800 Z"/><ellipse cx="0.900" cy="7.200" rx="1.150" ry="1.800" transform="rotate(-30 0.900 7.200)"/><ellipse cx="4" cy="4.600" rx="1.350" ry="2.100" transform="rotate(-20 4 4.600)"/><ellipse cx="8.300" cy="3.400" rx="1.550" ry="2.300" transform="rotate(-5 8.300 3.400)"/><path d="M11.800,4.800 C11.800,2.800 14.500,0.800 17,0.600 C18.800,0.600 19.800,1.500 19.900,2.400 L18.600,1.900 C17.500,2 17.200,2.800 16.300,3.900 C15.200,5.300 14,6.300 12.900,6.200 C12.100,6.100 11.800,5.500 11.800,4.800 Z"/></g></g>
<path d="M29.500,876 V900" stroke="#707270" stroke-width="1"/><path d="M30.500,876 V900" stroke="#fafafa" stroke-width="1"/>
<g transform="translate(35,878.7) scale(1.0)"><path d="M0.600,3 Q0.600,1 2.600,0.900 H6.800 Q8.200,0.900 8.700,2 L9.200,3 H18 Q19.600,3 19.600,4.600 V15.300 Q19.600,16.700 18,16.700 H2.200 Q0.600,16.700 0.600,15.300 Z" fill="#5b8fd6" stroke="#2f62ac" stroke-width="0.900"/><path d="M1.200,2.800 Q1.200,1.500 2.600,1.500 H6.800 Q7.700,1.500 8.100,2.300 L8.500,3.200 H1.200 Z" fill="#8db6ea"/><path d="M1.200,5 H19 V15.300 Q19,16.100 18,16.100 H2.200 Q1.200,16.100 1.200,15.300 Z" fill="#79a7e3"/><rect x="8" y="7.800" width="4.200" height="5.600" rx="1" fill="none" stroke="#2b5cab" stroke-width="1.300"/><path d="M5,9 v-1.800 h1.800 M5,12.200 v1.800 h1.800 M15.200,9 v-1.800 h-1.800 M15.200,12.200 v1.800 h-1.800" fill="none" stroke="#2b5cab" stroke-width="1.200"/></g>
<g transform="translate(60,879) scale(1.0)"><rect x="0.500" y="0.300" width="19" height="17" rx="1.800" fill="#4e504d" stroke="#2a2c2a" stroke-width="1"/><rect x="2.200" y="1.900" width="15.600" height="11" rx="0.600" fill="#2b2d2b" stroke="#787a76" stroke-width="0.600"/><path d="M2.500,3.500 h15 M2.500,5.500 h15 M2.500,7.500 h15 M2.500,9.500 h15 M2.500,11.500 h15" stroke="#50524f" stroke-width="0.800"/><path d="M5,5.800 L7.800,8.300 L5,10.800" fill="none" stroke="#fff" stroke-width="1.200"/><path d="M8.500,11 h3" stroke="#fff" stroke-width="1.200"/><rect x="1.500" y="13.600" width="17" height="2.300" fill="#80827e"/><rect x="2.200" y="14.100" width="2" height="1.200" fill="#73d216"/><rect x="13" y="14.300" width="1.800" height="0.800" fill="#3a3c3a"/><rect x="15.500" y="14.300" width="1.800" height="0.800" fill="#3a3c3a"/></g>
<g transform="translate(85,877.5) scale(1.0)"><path d="M2.800,0.500 H15.200 Q16.200,0.500 16.600,1.500 L17.600,4.500 V19 Q17.600,20 16.600,20 H1.400 Q0.400,20 0.400,19 V4.500 L1.400,1.500 Q1.800,0.500 2.800,0.500 Z" fill="#eeeeec" stroke="#8c8e8a" stroke-width="0.900"/><path d="M1.200,4.800 H16.800" stroke="#c0c2be" stroke-width="0.800"/><rect x="2.800" y="6.300" width="12.400" height="5.400" rx="0.800" fill="#d3d7cf" stroke="#8c8e8a" stroke-width="0.800"/><rect x="2.800" y="12.900" width="12.400" height="5.400" rx="0.800" fill="#d3d7cf" stroke="#8c8e8a" stroke-width="0.800"/><rect x="7" y="8.300" width="4" height="1.500" fill="#70726e"/><rect x="7" y="14.900" width="4" height="1.500" fill="#70726e"/></g>
<g transform="translate(108.7,877) scale(1.0)"><rect x="0.500" y="0.500" width="17.400" height="19.300" rx="1.300" fill="#787a76" stroke="#2e302e" stroke-width="1"/><rect x="1" y="1" width="16.400" height="1.500" fill="#555753"/><rect x="1.800" y="2.800" width="14.800" height="4.200" rx="0.600" fill="#8ae234" stroke="#4e9a06" stroke-width="0.500"/><rect x="3.500" y="4" width="11.500" height="1.800" fill="#b8f080"/><rect x="3.1" y="9.0" width="1.300" height="1.200" fill="#f0f0ee"/><rect x="6.2" y="9.0" width="1.300" height="1.200" fill="#f0f0ee"/><rect x="9.3" y="9.0" width="1.300" height="1.200" fill="#f0f0ee"/><rect x="12.4" y="9.0" width="1.300" height="1.200" fill="#f0f0ee"/><rect x="3.1" y="11.7" width="1.300" height="1.200" fill="#f0f0ee"/><rect x="6.2" y="11.7" width="1.300" height="1.200" fill="#f0f0ee"/><rect x="9.3" y="11.7" width="1.300" height="1.200" fill="#f0f0ee"/><rect x="12.4" y="11.7" width="1.300" height="1.200" fill="#f0f0ee"/><rect x="3.1" y="14.4" width="1.300" height="1.200" fill="#f0f0ee"/><rect x="6.2" y="14.4" width="1.300" height="1.200" fill="#f0f0ee"/><rect x="9.3" y="14.4" width="1.300" height="1.200" fill="#f0f0ee"/><rect x="12.4" y="14.4" width="1.300" height="1.200" fill="#f0f0ee"/><rect x="3.1" y="17.1" width="1.300" height="1.200" fill="#f0f0ee"/><rect x="6.2" y="17.1" width="1.300" height="1.200" fill="#f0f0ee"/><rect x="9.3" y="17.1" width="1.300" height="1.200" fill="#f0f0ee"/><rect x="12.4" y="17.1" width="1.300" height="1.200" fill="#f0f0ee"/><rect x="14.300" y="14" width="2.300" height="4" fill="#60625e"/><path d="M0,20.300 H18.500" stroke="#3a3c3a" stroke-width="1.200" opacity="0.700"/></g>
<g transform="translate(131.7,878) scale(1.0)"><rect x="1" y="1" width="18" height="18" fill="#fff" stroke="#006400" stroke-width="2"/><path d="M3.500,4.500 H9 L11,7.300 L13.500,4.500 H17 L13,10 L17.500,15.800 H12 L10,13 L7.500,15.800 H3 L8,10 Z" fill="#006400"/><path d="M5,5 L15.500,15.500" stroke="#a0d8a0" stroke-width="0.700"/></g>
<g transform="translate(155.5,878) scale(1.0)"><rect x="1" y="1" width="18" height="18" fill="#fff" stroke="#000080" stroke-width="2"/><path d="M3.300,5.500 H7 L6.800,11.500 L9.800,5.500 H12.300 L12.100,11.500 L15,5.500 H18 L13.500,15.300 H10.300 L10.200,10 L7.800,15.300 H4.500 Z" fill="#000080"/></g>
<g transform="translate(178,876) scale(1.0)"><circle cx="12" cy="12" r="12" fill="#bccae6"/><circle cx="11.64" cy="11.040000000000001" r="10.8" fill="#c6d6ec"/><circle cx="10.8" cy="9.600000000000001" r="7.4399999999999995" fill="#d2e0f0"/><path d="M1.56,17.4 A12,12 0 0 0 22.44,17.4 Q12,21.0 1.56,17.4 Z" fill="#b4aedc" opacity="0.850"/></g>
<g transform="translate(217,879.5) scale(1.0)"><path d="M0.800,2.500 Q0.800,1 2.300,1 H6 Q7,1 7.400,2 L7.800,2.800 H14.500 Q15.800,2.800 15.800,4 V13.500 Q15.800,14.800 14.500,14.800 H2.300 Q0.800,14.800 0.800,13.500 Z" fill="#b4cbe8" stroke="#7a9cc8" stroke-width="0.900"/><path d="M1.300,5 H15.300 V13.500 Q15.300,14.300 14.500,14.300 H2.300 Q1.300,14.300 1.300,13.500 Z" fill="#c6d8f0"/></g>
<g transform="translate(364,880) scale(1.0)"><circle cx="7.7" cy="7.7" r="7.7" fill="#c8d0e8" stroke="#a8b0d0" stroke-width="0.600"/><circle cx="6.16" cy="5.775" r="4.235" fill="#eef2fa" opacity="0.850"/></g>
<g transform="translate(511,880) scale(1.0)"><g transform="scale(1.0)"><rect x="0" y="0" width="16" height="16" rx="2" fill="#fff"/><path d="M1.800,2.800 L5.200,13 L8.600,2.800" fill="none" stroke="#ff2a2a" stroke-width="1.900"/><path d="M10.300,7.800 V3.600 M10.300,5.200 Q12.400,2.400 14.200,4.300 V7.800" fill="none" stroke="#18b018" stroke-width="1.500"/><path d="M14.500,9.800 Q10.300,8.800 10.500,11.800 Q10.800,14.300 14.500,13.500" fill="none" stroke="#2850ff" stroke-width="1.500"/></g></g>
<g transform="translate(657.5,879.5) scale(1.0)"><path d="M0.800,2.500 Q0.800,1 2.300,1 H6 Q7,1 7.400,2 L7.800,2.800 H14.500 Q15.800,2.800 15.800,4 V13.500 Q15.800,14.800 14.500,14.800 H2.300 Q0.800,14.800 0.800,13.500 Z" fill="#b4cbe8" stroke="#7a9cc8" stroke-width="0.900"/><path d="M1.300,5 H15.300 V13.500 Q15.300,14.300 14.500,14.300 H2.300 Q1.300,14.300 1.300,13.500 Z" fill="#c6d8f0"/></g>
<g transform="translate(804.5,880.5) scale(1.0)"><rect x="0.0" y="0.0" width="3.200" height="2.800" fill="#fff" opacity="0.57"/><rect x="0.0" y="2.8" width="3.200" height="2.800" fill="#fff" opacity="0.60"/><rect x="0.0" y="8.4" width="3.200" height="2.800" fill="#fff" opacity="0.31"/><rect x="3.2" y="0.0" width="3.200" height="2.800" fill="#fff" opacity="0.42"/><rect x="3.2" y="5.6" width="3.200" height="2.800" fill="#fff" opacity="0.72"/><rect x="3.2" y="8.4" width="3.200" height="2.800" fill="#fff" opacity="0.62"/><rect x="3.2" y="11.2" width="3.200" height="2.800" fill="#fff" opacity="0.62"/><rect x="6.4" y="2.8" width="3.200" height="2.800" fill="#fff" opacity="0.67"/><rect x="6.4" y="8.4" width="3.200" height="2.800" fill="#fff" opacity="0.68"/><rect x="6.4" y="11.2" width="3.200" height="2.800" fill="#fff" opacity="0.45"/><rect x="9.6" y="0.0" width="3.200" height="2.800" fill="#fff" opacity="0.73"/><rect x="9.6" y="2.8" width="3.200" height="2.800" fill="#fff" opacity="0.66"/><rect x="12.8" y="0.0" width="3.200" height="2.800" fill="#fff" opacity="0.70"/><rect x="12.8" y="2.8" width="3.200" height="2.800" fill="#fff" opacity="0.77"/><rect x="12.8" y="8.4" width="3.200" height="2.800" fill="#fff" opacity="0.37"/><rect x="12.8" y="11.2" width="3.200" height="2.800" fill="#fff" opacity="0.78"/></g>
<g transform="translate(949,879) scale(1.0)"><path d="M1,3 Q1,1.300 2.800,1.300 H8 Q9,1.300 9.500,2.300 L10,3.300 H21 Q22.500,3.300 22.500,4.800 V13.500 H1 Z" fill="#8ab0e0" stroke="#4a78b8" stroke-width="0.900"/><path d="M1.500,5.500 H22 V13 H1.500 Z" fill="#a4c4ec"/><path d="M1,15 H23" stroke="#8a8c88" stroke-width="1.300"/><rect x="8" y="13" width="7" height="3" rx="1" fill="#5a5c58"/><path d="M23.500,11.500 V17.500 H17 Z" fill="#20d020"/></g>
<g transform="translate(984,877) scale(1.0)"><circle cx="11" cy="11" r="11" fill="#2ca0dc"/><path d="M4.62,11.0 L17.05,5.720000000000001 L14.3,17.05 L10.78,14.08 L8.8,16.5 L8.58,12.649999999999999 Z" fill="#fff"/><path d="M8.58,12.649999999999999 L15.399999999999999,7.48 L10.78,14.08 Z" fill="#c8daea"/></g>
<g transform="translate(1011,876) scale(1.0)"><ellipse cx="9.25" cy="12.0" rx="9.25" ry="12.0" fill="#3a6cb6"/><ellipse cx="9.25" cy="9.120000000000001" rx="7.77" ry="8.16" fill="#5a8ed4" opacity="0.550"/><path d="M5.18,7.92 L12.95,16.08 L9.25,19.92 V4.08 L12.95,7.92 L5.18,16.08" fill="none" stroke="#fff" stroke-width="1.5725" stroke-linejoin="miter"/></g>
<g transform="translate(1036.5,877.5) scale(1.0)"><path d="M9.25,0.300 Q11.47,5.5 16.650000000000002,11.0 Q19.98,17.16 14.8,20.46 Q9.25,22.880000000000003 3.7,20.46 Q-1.48,17.16 1.85,11.0 Q7.03,5.5 9.25,0.300 Z" fill="#2f5f9c" stroke="#244a80" stroke-width="0.600"/><path d="M9.25,1.3199999999999998 Q10.360000000000001,4.84 12.95,7.92 Q9.25,6.6 5.55,8.36 Q8.14,4.84 9.25,1.3199999999999998 Z" fill="#7ea6d4" opacity="0.800"/><circle cx="9.620000000000001" cy="14.3" r="5.92" fill="#a9c9ea"/><circle cx="10.545" cy="14.96" r="4.625" fill="#6f9fd2"/><circle cx="9.25" cy="13.64" r="2.2199999999999998" fill="#9cc0e6" opacity="0.700"/></g>
<g transform="translate(1058,876) scale(1.0)"><rect x="0" y="0" width="24.3" height="8.0" fill="#fff"/><rect x="0" y="8.0" width="24.3" height="8.0" fill="#000080"/><rect x="0" y="16.0" width="24.3" height="8.0" fill="#ff0000"/></g>
<g transform="translate(1085,877.5) scale(1.0)"><g transform="scale(1.0)"><path d="M0.300,8 Q0.300,7 1.300,7 H3.800 L8.300,1.500 Q9.500,0.800 9.600,2.300 V19 Q9.500,20.500 8.300,19.800 L3.800,14.500 H1.300 Q0.300,14.500 0.300,13.500 Z" fill="#9a9c98" stroke="#5c5e5a" stroke-width="0.800"/><path d="M4.500,7.500 L8.200,3 V18.300 L4.500,14 Z" fill="#d0d2ce"/><path d="M6.800,2.500 V19" stroke="#70726e" stroke-width="0.900"/><path d="M12.300,8 Q14.300,10.800 12.300,13.800" fill="none" stroke="#5a82c4" stroke-width="1.200"/></g></g>
<g transform="translate(1111,878.5) scale(1.0)"><path d="M0.500,18.500 V13 L5,11 V18.500 Z" fill="#3a68b0" stroke="#28487c" stroke-width="0.700"/><path d="M6.500,18.500 V9 L11,6 V18.500 Z" fill="#3a68b0" stroke="#28487c" stroke-width="0.700"/><path d="M12.500,18.500 V4 L18,0.500 V18.500 Z" fill="#e0e4ec" stroke="#5a6070" stroke-width="0.800"/><path d="M12.500,18.500 V4 L15,2.500 V18.500 Z" fill="#3a68b0"/></g>
<g transform="translate(1135,876.5) scale(1.0)"><rect x="1" y="2.500" width="10" height="15" rx="1" fill="#f0f0ee" stroke="#6c6e6a" stroke-width="1"/><rect x="4" y="0.800" width="4" height="2" fill="#6c6e6a"/><rect x="2" y="12" width="8" height="4.500" fill="#3a68c0"/><path d="M7.500,4.500 L4,10 H6.500 L5,14 L9,8.500 H6.500 Z" fill="#f0a020" stroke="#a06010" stroke-width="0.400"/><path d="M9,13 H15 V10.500 H19 Q21,10.500 21,13 V15 H19 V19.500 H10.500 V15 H9 Z" fill="#f4f4f2" stroke="#8a8c88" stroke-width="0.900"/><path d="M12,19.500 v1.500 M17,19.500 v1.500" stroke="#8a8c88" stroke-width="1.500"/></g>
<g transform="translate(1163.8,878.3) scale(1.0)"><g transform="scale(0.96)"><path d="M1,1 H10 Q10.500,8 5.500,9.500 Q0.500,8 1,1 Z" fill="#f4e8e8" stroke="#b09090" stroke-width="0.700"/><path d="M1.300,4 H9.700 Q9.500,8 5.500,9.200 Q1.500,8 1.300,4 Z" fill="#a01020"/><path d="M5.500,9.500 V16.500 M2.500,17.300 H8.500" stroke="#a09090" stroke-width="1.200"/></g></g>
<g transform="translate(1180.5,877.5) scale(1.04)"><rect x="2" y="4.500" width="11" height="13" rx="1" fill="#5a6a3a" stroke="#2a3018" stroke-width="0.900"/><rect x="4.500" y="7.500" width="6" height="7" fill="#a8b088"/><path d="M0,7 h2 M0,9.500 h2 M0,12 h2 M0,14.500 h2 M13,7 h2 M13,9.500 h2 M13,12 h2 M13,14.500 h2" stroke="#c8a830" stroke-width="1.200"/><rect x="15.500" y="1" width="7.500" height="19.500" rx="1.500" fill="#fff" stroke="#2a2a2a" stroke-width="1.200"/><rect x="16.300" y="10" width="5.900" height="9.800" fill="#8a80d8"/></g>
<g transform="translate(1266,880.5) scale(1.0)"><circle cx="7.5" cy="7.5" r="7.5" fill="#c4c4c0" stroke="#9c9c98" stroke-width="0.700"/><circle cx="6.375" cy="6.75" r="4.5" fill="#dcdcd8" opacity="0.800"/><circle cx="9.0" cy="5.25" r="1.875" fill="#b0b0ac" opacity="0.700"/></g>
<g transform="translate(746,848) scale(1.0)"><path d="M0.500,0.500 V15 L4,11.800 L6.300,17.300 L8.700,16.300 L6.400,11 H11 Z" fill="#fff" stroke="#000" stroke-width="1"/></g>
</svg>
</body></html>
